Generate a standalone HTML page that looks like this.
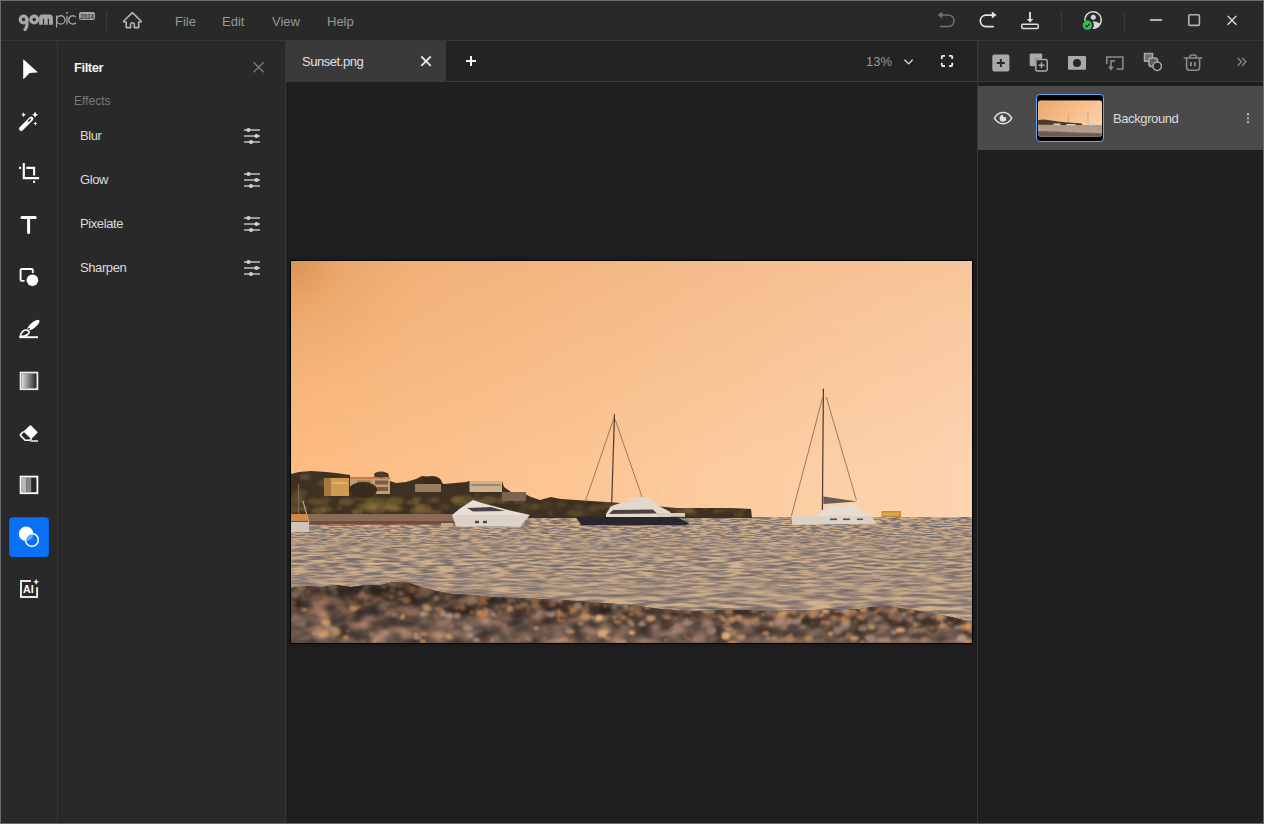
<!DOCTYPE html>
<html><head><meta charset="utf-8">
<style>
*{margin:0;padding:0;box-sizing:border-box}
html,body{width:1264px;height:824px;overflow:hidden;background:#1f1f1f;font-family:"Liberation Sans",sans-serif}
.a{position:absolute}
.t{position:absolute;white-space:nowrap;line-height:1}
svg.a{position:absolute;overflow:visible}
</style></head><body>
<!-- frame -->
<div class="a" style="left:0;top:0;width:1264px;height:824px;background:#6b6b6b"></div>
<div class="a" style="left:1px;top:1px;width:1262px;height:822px;background:#1f1f1f"></div>
<!-- title bar -->
<div class="a" style="left:1px;top:1px;width:1262px;height:39px;background:#292929"></div>
<div class="a" style="left:1px;top:40px;width:1262px;height:1px;background:#383838"></div>
<!-- left toolbar -->
<div class="a" style="left:1px;top:41px;width:56px;height:782px;background:#292929"></div>
<div class="a" style="left:57px;top:41px;width:1px;height:782px;background:#383838"></div>
<!-- filter panel -->
<div class="a" style="left:58px;top:41px;width:227px;height:782px;background:#292929"></div>
<div class="a" style="left:285px;top:41px;width:1px;height:782px;background:#383838"></div>
<!-- tab bar -->
<div class="a" style="left:286px;top:41px;width:691px;height:40px;background:#232323"></div>
<div class="a" style="left:286px;top:41px;width:160px;height:40px;background:#3a3a3a"></div>
<div class="a" style="left:286px;top:81px;width:691px;height:1px;background:#383838"></div>
<div class="a" style="left:977px;top:41px;width:1px;height:782px;background:#383838"></div>
<!-- right panel -->
<div class="a" style="left:978px;top:41px;width:285px;height:40px;background:#292929"></div>
<div class="a" style="left:978px;top:81px;width:285px;height:1px;background:#383838"></div>
<div class="a" style="left:978px;top:86px;width:285px;height:64px;background:#4a4a4a"></div>


<svg class="a" style="left:0;top:0" width="1264" height="824" viewBox="0 0 1264 824">
<!-- logo -->
<g fill="none" stroke="#a6a6a6">
 <g stroke-width="3.3">
  <circle cx="23.6" cy="19.5" r="3.35"/>
  <path d="M26.9,19.5 V24.6 Q26.9,27.8 25,29.4" stroke-linecap="round"/>
  <circle cx="34.2" cy="19.5" r="3.35"/>
 </g>
 <g stroke-width="1.3">
  <path d="M56.6,15.4 V27.4"/>
  <circle cx="60.8" cy="19.9" r="4.15"/>
  <path d="M67,15.8 V24.4"/>
  <path d="M75.9,17.1 A4.15,4.15 0 1 0 75.9,22.7"/>
 </g>
</g>
<path d="M39.1,24.7 V17.8 Q39.1,14.4 42.5,14.4 H49.5 Q52.9,14.4 52.9,17.8 V24.7 Z" fill="#a6a6a6"/>
<path d="M42.9,24.8 V19 Q43.5,18.1 44.1,19 V24.8 Z M47.8,24.8 V19 Q48.4,18.1 49,19 V24.8 Z" fill="#292929"/>
<rect x="66.2" y="12" width="1.6" height="1.6" fill="#a6a6a6"/>
<rect x="79" y="12" width="16" height="8" rx="2" fill="#a6a6a6"/>
<text x="87" y="18.5" font-family="Liberation Sans" font-size="6.4" font-weight="bold" fill="#3a3a3a" text-anchor="middle" letter-spacing="-0.1">2024</text>
<!-- separators -->
<rect x="106" y="11" width="1" height="19" fill="#3c3c3c"/>
<rect x="1061" y="11" width="1" height="19" fill="#3c3c3c"/>
<rect x="1124" y="11" width="1" height="19" fill="#3c3c3c"/>
<!-- home -->
<path d="M132.4,12.6 L123.8,21 Q123.3,21.9 124.3,22 L126.2,22 L126.2,27.6 L130.6,27.6 L130.6,24.6 A1.85,1.85 0 0 1 134.3,24.6 L134.3,27.6 L138.7,27.6 L138.7,22 L140.5,22 Q141.5,21.9 141,21 Z" fill="none" stroke="#b4b4b4" stroke-width="1.6" stroke-linejoin="round"/>
<!-- undo -->
<g stroke="#727272" stroke-width="1.5" fill="none">
 <path d="M941.5,15.1 H948.3 A5.75,5.75 0 0 1 948.3,26.6 H940.2"/>
</g>
<path d="M937.6,15.1 L942.4,11.6 L942.4,18.6 Z" fill="#727272"/>
<!-- redo -->
<g stroke="#e2e2e2" stroke-width="1.7" fill="none">
 <path d="M992.6,15.1 H985.4 A5.8,5.8 0 0 0 985.4,26.6 H993.8"/>
</g>
<path d="M996.6,15.1 L991.8,11.6 L991.8,18.6 Z" fill="#e2e2e2"/>
<!-- download -->
<g stroke="#dedede" fill="none">
 <path d="M1030,12 V20" stroke-width="1.9"/>
 <rect x="1021.8" y="24.2" width="16.4" height="4.2" rx="1" stroke-width="1.5"/>
</g>
<path d="M1026.6,18.9 L1033.4,18.9 L1030,22.6 Z" fill="#dedede"/>
<!-- profile -->
<path d="M1084.9,20.9 A8.2,8.2 0 1 1 1093.1,28.1" fill="none" stroke="#d6d6d6" stroke-width="1.6"/>
<circle cx="1093.3" cy="17.2" r="2.5" fill="#d6d6d6"/>
<path d="M1092.6,21.2 Q1097.6,21.2 1100.6,24.6 A8.2,8.2 0 0 1 1092.4,28.9 A6.4,6.4 0 0 0 1092.6,21.2 Z" fill="#d6d6d6"/>
<circle cx="1087.4" cy="25.2" r="4.6" fill="#30c35a"/>
<path d="M1085.3,25.2 L1086.9,26.9 L1089.7,23.6" stroke="#1d1d1d" stroke-width="1.2" fill="none"/>
<!-- window controls -->
<rect x="1150" y="19" width="12" height="2" fill="#b2b2b2"/>
<rect x="1188.8" y="14.8" width="10.6" height="10.6" rx="1" fill="none" stroke="#b2b2b2" stroke-width="1.6"/>
<path d="M1227.6,15.9 L1236.4,24.7 M1236.4,15.9 L1227.6,24.7" stroke="#e4e4e4" stroke-width="1.3"/>

<!-- left toolbar -->
<path d="M23.2,60.3 Q23.2,59 24.2,59.9 L37.2,71.7 Q38.2,72.6 36.8,72.6 L29.6,72.9 L24.3,78.6 Q23.2,79.7 23.2,78.3 Z" fill="#ffffff"/>
<!-- wand -->
<path d="M21.2,128.8 L31.2,118.8" stroke="#fff" stroke-width="4.4" stroke-linecap="round"/>
<path d="M28.5,121.2 L30.4,119.3" stroke="#292929" stroke-width="1.5" stroke-linecap="round"/>
<path d="M35.1,111.6 Q35.5,114.3 38.2,114.7 Q35.5,115.1 35.1,117.8 Q34.7,115.1 32,114.7 Q34.7,114.3 35.1,111.6Z" fill="#fff"/>
<path d="M23.5,112.2 Q23.8,114.4 26,114.7 Q23.8,115 23.5,117.2 Q23.2,115 21,114.7 Q23.2,114.4 23.5,112.2Z" fill="#fff"/>
<path d="M35.4,121.4 Q35.7,123.2 37.5,123.5 Q35.7,123.8 35.4,125.6 Q35.1,123.8 33.3,123.5 Q35.1,123.2 35.4,121.4Z" fill="#fff"/>
<!-- crop -->
<g stroke="#fff" stroke-width="2.1" fill="none">
 <path d="M23.8,163 V178.1 H39.1"/>
 <path d="M26.3,167.9 H34.1 V175.6"/>
</g>
<rect x="19" y="166.8" width="2.1" height="2.1" fill="#fff"/>
<rect x="33" y="180.8" width="2.1" height="2.1" fill="#fff"/>
<!-- T -->
<path d="M22,217.5 H35.2 M28.6,217.5 V232.6" stroke="#fff" stroke-width="3" stroke-linecap="round"/>
<!-- shape -->
<path d="M24.5,280.9 H21.8 Q20.6,280.9 20.6,279.7 V270.2 Q20.6,269 21.8,269 H31.6 Q32.8,269 32.8,270.2 V273" fill="none" stroke="#fff" stroke-width="1.9"/>
<circle cx="32.4" cy="280.2" r="5.8" fill="#fff"/>
<!-- brush -->
<ellipse cx="33.4" cy="325.1" rx="7.6" ry="2.8" transform="rotate(-40 33.4 325.1)" fill="#fff"/>
<ellipse cx="28.9" cy="328.8" rx="1.2" ry="0.8" transform="rotate(-40 28.9 328.8)" fill="#292929"/>
<path d="M27.3,330.2 Q30.2,331.6 28.6,333.6 Q25.8,336.6 20.2,336.6 Q20.7,333.1 23,331.1 Q25.2,329.4 27.3,330.2 Z" fill="none" stroke="#fff" stroke-width="1.6" stroke-linejoin="round"/>
<path d="M19.3,337.2 H38" stroke="#fff" stroke-width="1.9"/>
<!-- gradient square -->
<defs>
 <linearGradient id="g1" x1="0" x2="1" y1="0" y2="0"><stop offset="0" stop-color="#dcdcdc"/><stop offset="1" stop-color="#262626"/></linearGradient>
</defs>
<rect x="21.6" y="373.6" width="14.8" height="14.6" fill="url(#g1)"/>
<rect x="20.6" y="372.6" width="16.8" height="16.6" fill="none" stroke="#eeeeee" stroke-width="1.8"/>
<!-- eraser -->
<path d="M29.8,425.5 Q30.4,425 31,425.5 L37.3,431.8 Q37.9,432.4 37.3,433 L31.2,439.1 L23.4,431.6 Z" fill="#fff"/>
<path d="M23.6,431.5 L20.6,434.4 Q20,435 20.6,435.6 L25.2,440.2 H29.8 L31.6,438.6" fill="none" stroke="#fff" stroke-width="1.5" stroke-linejoin="round"/>
<path d="M30.5,441 H38" stroke="#e6e6e6" stroke-width="1.6"/>
<!-- bars icon -->
<rect x="21.6" y="477.6" width="4.6" height="14.6" fill="#b8b8b8"/>
<rect x="26.2" y="477.6" width="5" height="14.6" fill="#858585"/>
<rect x="20.6" y="476.6" width="16.8" height="16.6" fill="none" stroke="#ffffff" stroke-width="1.8"/>
<!-- active filter -->
<rect x="9.2" y="517.2" width="39.7" height="39.7" rx="3.6" fill="#0a70f5"/>
<circle cx="26.1" cy="533.8" r="7.3" fill="#fff"/>
<clipPath id="c1"><circle cx="26.1" cy="533.8" r="7.3"/></clipPath>
<circle cx="31.9" cy="539.9" r="6.3" fill="#0a70f5"/>
<circle cx="31.9" cy="539.9" r="6.3" fill="#6aa6fb" clip-path="url(#c1)"/>
<circle cx="31.9" cy="539.9" r="6.4" fill="none" stroke="#fff" stroke-width="1.5"/>
<!-- AI -->
<path d="M31,581 H21 V597.1 H37.1 V587.2" fill="none" stroke="#e8e8e8" stroke-width="2"/>
<text x="28.3" y="593.2" font-family="Liberation Sans" font-weight="bold" font-size="10.6" fill="#fff" text-anchor="middle">AI</text>
<path d="M36.2,578.9 Q36.6,581.4 39.1,581.8 Q36.6,582.2 36.2,584.7 Q35.8,582.2 33.3,581.8 Q35.8,581.4 36.2,578.9Z" fill="#fff"/>

<!-- filter panel close -->
<path d="M253.6,62.3 L263.6,72.3 M263.6,62.3 L253.6,72.3" stroke="#7c7c7c" stroke-width="1.4"/>
<!-- sliders -->
<g id="sl">
 <path d="M244,130 H260 M244,136 H260 M244,142 H260" stroke="#bebebe" stroke-width="1.5"/>
 <circle cx="248.5" cy="130" r="2.1" fill="#d2d2d2"/>
 <circle cx="256.5" cy="136" r="2.1" fill="#d2d2d2"/>
 <circle cx="251" cy="142" r="2.1" fill="#d2d2d2"/>
</g>
<use href="#sl" y="44"/>
<use href="#sl" y="88"/>
<use href="#sl" y="132"/>

<!-- tab bar -->
<path d="M421.3,56.5 L430.7,65.9 M430.7,56.5 L421.3,65.9" stroke="#e6e6e6" stroke-width="1.8"/>
<path d="M466,61 H476 M471,56 V66" stroke="#f2f2f2" stroke-width="2"/>
<path d="M904.5,59.8 L908.6,63.9 L912.7,59.8" fill="none" stroke="#dadada" stroke-width="1.3"/>
<path d="M941.8,59 V56.6 Q941.8,55.8 942.6,55.8 H945 M949,55.8 H951.4 Q952.2,55.8 952.2,56.6 V59 M952.2,62.8 V65.2 Q952.2,66 951.4,66 H949 M945,66 H942.6 Q941.8,66 941.8,65.2 V62.8" fill="none" stroke="#e8e8e8" stroke-width="1.8"/>

<!-- layer toolbar -->
<rect x="992.3" y="54.4" width="17.1" height="17.1" rx="2" fill="#a9a9a9"/>
<path d="M996.8,63 H1004.9 M1000.85,58.9 V67.1" stroke="#262626" stroke-width="1.9"/>
<path d="M1035,58.8 V58 Q1035,56.8 1036.2,56.8 H1037.6" fill="none"/>
<path d="M1031,53.6 H1041 Q1042.2,53.6 1042.2,54.8 V58.7 H1036.2 Q1035,58.7 1035,59.9 V66.3 H1031 Q1029.7,66.3 1029.7,65 V54.9 Q1029.7,53.6 1031,53.6 Z" fill="#a9a9a9"/>
<rect x="1035.8" y="59.5" width="11.4" height="11.4" rx="1.3" fill="#262626" stroke="#a9a9a9" stroke-width="1.5"/>
<path d="M1038.5,65.2 H1044.5 M1041.5,62.2 V68.2" stroke="#a9a9a9" stroke-width="1.4"/>
<rect x="1068" y="55.9" width="18" height="13.9" rx="1" fill="#a9a9a9"/>
<circle cx="1077" cy="62.9" r="4" fill="#262626"/>
<path d="M1106.8,64 V57 H1122.9 V69 H1116.6" fill="none" stroke="#8a8a8a" stroke-width="1.6"/>
<path d="M1115,60.9 H1111 V67" fill="none" stroke="#8a8a8a" stroke-width="1.6"/>
<path d="M1108.1,66.6 L1113.9,66.6 L1111,70.8 Z" fill="#8a8a8a"/>
<rect x="1144.5" y="53.5" width="8" height="7.8" fill="#6e6e6e" stroke="#a9a9a9" stroke-width="1.5"/>
<rect x="1148.9" y="57.9" width="8.6" height="8.6" rx="2.6" fill="#5e5e5e" stroke="#a9a9a9" stroke-width="1.5"/>
<circle cx="1157.2" cy="66.3" r="4.2" fill="#292929" stroke="#a9a9a9" stroke-width="1.5"/>
<path d="M1184.2,58 H1201.8" stroke="#8a8a8a" stroke-width="1.6" stroke-linecap="round"/>
<path d="M1190,57.8 V56.4 Q1190,54.9 1191.5,54.9 H1194.7 Q1196.2,54.9 1196.2,56.4 V57.8" fill="none" stroke="#8a8a8a" stroke-width="1.5"/>
<path d="M1186.6,58.3 V67.6 Q1186.6,70.2 1189.2,70.2 H1197 Q1199.6,70.2 1199.6,67.6 V58.3" fill="none" stroke="#8a8a8a" stroke-width="1.6"/>
<path d="M1190.9,62 V66.3 M1194.8,62 V66.3" stroke="#8a8a8a" stroke-width="1.9"/>
<path d="M1237.7,57.7 L1241.4,61.7 L1237.7,65.7 M1242.1,57.7 L1245.8,61.7 L1242.1,65.7" fill="none" stroke="#8a8a8a" stroke-width="1.3"/>

<!-- layer row -->
<path d="M994.4,118.2 C996.8,114.2 999.6,112.6 1003.1,112.6 C1006.6,112.6 1009.4,114.2 1011.8,118.2 C1009.4,122.2 1006.6,123.8 1003.1,123.8 C999.6,123.8 996.8,122.2 994.4,118.2 Z" fill="none" stroke="#e0e0e0" stroke-width="1.5"/>
<circle cx="1002.9" cy="118.4" r="3.3" fill="#e0e0e0"/>
<circle cx="1004.9" cy="115.4" r="1.9" fill="#4a4a4a"/>
<circle cx="1248" cy="114.3" r="1.05" fill="#d0d0d0"/>
<circle cx="1248" cy="118.2" r="1.05" fill="#d0d0d0"/>
<circle cx="1248" cy="122.1" r="1.05" fill="#d0d0d0"/>
<rect x="1036.5" y="94.5" width="67" height="47" rx="3.5" fill="#000" stroke="#6aa6ee" stroke-width="1"/>
</svg>





























<!-- PHOTO -->
<div class="a" style="left:290px;top:260px;width:683px;height:384px;background:#000;box-shadow:0 0 3px 1px rgba(0,0,0,0.25)"></div>
<svg class="a" style="left:290px;top:260px" width="683" height="384" viewBox="0 0 683 384">
<rect width="683" height="384" fill="#000"/>
<svg x="1" y="1" width="681" height="382" viewBox="0 0 681 382" overflow="hidden">
<defs>
<linearGradient id="skyB" x1="0" x2="1" y1="0" y2="0"><stop offset="0" stop-color="#fcbc82"/><stop offset="0.5" stop-color="#fcc898"/><stop offset="1" stop-color="#fdd4b0"/></linearGradient>
<linearGradient id="skyT" x1="0" x2="1" y1="0" y2="0"><stop offset="0" stop-color="#eeab70"/><stop offset="0.3" stop-color="#f2b37d"/><stop offset="0.6" stop-color="#f4bb8b"/><stop offset="1" stop-color="#f8c59b"/></linearGradient>
<linearGradient id="mT" x1="0" x2="0" y1="0" y2="1"><stop offset="0" stop-color="#fff"/><stop offset="0.8" stop-color="#000"/></linearGradient>
<mask id="mask1" maskUnits="userSpaceOnUse" x="0" y="0" width="681" height="256"><rect width="681" height="256" fill="url(#mT)"/></mask>
<radialGradient id="vig" cx="0" cy="0" r="130" gradientUnits="userSpaceOnUse"><stop offset="0" stop-color="#c88040" stop-opacity="0.6"/><stop offset="0.4" stop-color="#d8904c" stop-opacity="0.2"/><stop offset="1" stop-color="#e09a58" stop-opacity="0"/></radialGradient>
<linearGradient id="sea" x1="0" x2="0" y1="0" y2="1"><stop offset="0" stop-color="#b9a690"/><stop offset="0.5" stop-color="#ae9a86"/><stop offset="1" stop-color="#a58f7e"/></linearGradient>
<linearGradient id="beach" x1="0" x2="0" y1="0" y2="1"><stop offset="0" stop-color="#5a4a40"/><stop offset="1" stop-color="#6e5a50"/></linearGradient>
<filter id="blur1" x="-20%" y="-20%" width="140%" height="140%"><feGaussianBlur stdDeviation="1.2"/></filter>
<filter id="blur2" x="-20%" y="-20%" width="140%" height="140%"><feGaussianBlur stdDeviation="0.5"/></filter>
<filter id="water1" x="0" y="0" width="100%" height="100%" filterUnits="objectBoundingBox" color-interpolation-filters="sRGB"><feTurbulence type="fractalNoise" baseFrequency="0.1 0.9" numOctaves="2" seed="3" result="n"/><feColorMatrix in="n" type="matrix" values="1 0 0 0 0  1 0 0 0 0  1 0 0 0 0  0 0 0 0 1"/><feComponentTransfer><feFuncR type="table" tableValues="0.38 0.42 0.54 0.78 0.85 0.87"/><feFuncG type="table" tableValues="0.38 0.41 0.48 0.66 0.71 0.72"/><feFuncB type="table" tableValues="0.4 0.42 0.46 0.53 0.56 0.56"/></feComponentTransfer></filter>
<filter id="water2" x="0" y="0" width="100%" height="100%" filterUnits="objectBoundingBox" color-interpolation-filters="sRGB"><feTurbulence type="fractalNoise" baseFrequency="0.055 0.5" numOctaves="2" seed="5" result="n"/><feColorMatrix in="n" type="matrix" values="1 0 0 0 0  1 0 0 0 0  1 0 0 0 0  0 0 0 0 1"/><feComponentTransfer><feFuncR type="table" tableValues="0.38 0.42 0.54 0.78 0.85 0.87"/><feFuncG type="table" tableValues="0.38 0.41 0.48 0.66 0.71 0.72"/><feFuncB type="table" tableValues="0.4 0.42 0.46 0.53 0.56 0.56"/></feComponentTransfer></filter>
<filter id="water3" x="0" y="0" width="100%" height="100%" filterUnits="objectBoundingBox" color-interpolation-filters="sRGB"><feTurbulence type="fractalNoise" baseFrequency="0.035 0.3" numOctaves="2" seed="9" result="n"/><feColorMatrix in="n" type="matrix" values="1 0 0 0 0  1 0 0 0 0  1 0 0 0 0  0 0 0 0 1"/><feComponentTransfer><feFuncR type="table" tableValues="0.38 0.42 0.54 0.78 0.85 0.87"/><feFuncG type="table" tableValues="0.38 0.41 0.48 0.66 0.71 0.72"/><feFuncB type="table" tableValues="0.4 0.42 0.46 0.53 0.56 0.56"/></feComponentTransfer></filter>
<filter id="pebf" x="0" y="0" width="100%" height="100%" filterUnits="objectBoundingBox" color-interpolation-filters="sRGB"><feTurbulence type="fractalNoise" baseFrequency="0.05 0.09" numOctaves="3" seed="11" result="n"/><feColorMatrix in="n" type="matrix" values="1 0 0 0 0  1 0 0 0 0  1 0 0 0 0  0 0 0 0 1"/><feComponentTransfer><feFuncR type="table" tableValues="0.1 0.16 0.28 0.5 0.74 0.86"/><feFuncG type="table" tableValues="0.08 0.12 0.22 0.39 0.53 0.6"/><feFuncB type="table" tableValues="0.08 0.1 0.19 0.33 0.42 0.46"/></feComponentTransfer><feGaussianBlur stdDeviation="1.4"/></filter>
<linearGradient id="mW" x1="0" x2="0" y1="0" y2="1"><stop offset="0" stop-color="#000"/><stop offset="1" stop-color="#fff"/></linearGradient>
<linearGradient id="mW2" x1="0" x2="0" y1="256" y2="382" gradientUnits="userSpaceOnUse"><stop offset="0.1" stop-color="#000"/><stop offset="0.35" stop-color="#fff"/></linearGradient>
<linearGradient id="mW3" x1="0" x2="0" y1="256" y2="382" gradientUnits="userSpaceOnUse"><stop offset="0.4" stop-color="#000"/><stop offset="0.7" stop-color="#fff"/></linearGradient>
<mask id="mask2" maskUnits="userSpaceOnUse" x="0" y="256" width="681" height="126"><rect y="256" width="681" height="126" fill="url(#mW2)"/></mask>
<mask id="mask3" maskUnits="userSpaceOnUse" x="0" y="256" width="681" height="126"><rect y="256" width="681" height="126" fill="url(#mW3)"/></mask>
</defs>
<g id="photo">
<rect width="681" height="260" fill="url(#skyB)"/>
<rect width="681" height="256" fill="url(#skyT)" mask="url(#mask1)"/>
<rect width="681" height="256" fill="url(#vig)"/>
<rect y="256" width="681" height="126" fill="#bea286"/>
<rect y="256" width="681" height="126" filter="url(#water1)" opacity="1"/>
<rect y="256" width="681" height="126" filter="url(#water2)" mask="url(#mask2)"/>
<rect y="256" width="681" height="126" filter="url(#water3)" mask="url(#mask3)"/>
<clipPath id="bclip"><path d="M0,327 L15,325 L30,326 L45,324 L60,326 L75,324 L90,324 L102,321 L118,322 L130,326 L145,330 L161,333 L180,334 L200,336 L230,337 L269,339 L300,341 L340,344 L370,348 L400,350 L440,349 L480,350 L520,349 L569,348 L580,346 L595,345 L609,347 L640,352 L660,356 L681,361 L681,382 L0,382 Z"/></clipPath>
<g clip-path="url(#bclip)"><rect y="300" width="681" height="82" fill="#4a3c36"/><rect y="300" width="681" height="82" filter="url(#pebf)"/>
<g filter="url(#blur1)"><ellipse cx="220.5" cy="339.3" rx="3.8" ry="2.0" fill="#a89080" opacity="0.54"/><ellipse cx="396.9" cy="377.7" rx="2.3" ry="1.2" fill="#c88048" opacity="0.53"/><ellipse cx="61.8" cy="341.3" rx="4.4" ry="2.4" fill="#d89050" opacity="0.75"/><ellipse cx="397.0" cy="350.3" rx="3.5" ry="1.8" fill="#d89050" opacity="0.52"/><ellipse cx="584.6" cy="351.4" rx="2.0" ry="1.1" fill="#f0b070" opacity="0.72"/><ellipse cx="464.4" cy="350.7" rx="3.5" ry="2.0" fill="#e0a060" opacity="0.72"/><ellipse cx="42.8" cy="325.1" rx="2.2" ry="1.7" fill="#c88048" opacity="0.81"/><ellipse cx="317.1" cy="377.5" rx="2.8" ry="1.7" fill="#d89050" opacity="0.78"/><ellipse cx="166.2" cy="354.5" rx="3.3" ry="2.8" fill="#b8a090" opacity="0.68"/><ellipse cx="414.7" cy="350.3" rx="3.3" ry="1.9" fill="#f0b070" opacity="0.56"/><ellipse cx="333.0" cy="343.8" rx="3.8" ry="3.1" fill="#a89080" opacity="0.82"/><ellipse cx="557.3" cy="354.9" rx="2.7" ry="1.9" fill="#c88048" opacity="0.53"/><ellipse cx="63.7" cy="333.4" rx="3.9" ry="2.1" fill="#b8a090" opacity="0.78"/><ellipse cx="440.7" cy="381.7" rx="4.4" ry="2.7" fill="#c88048" opacity="0.85"/><ellipse cx="236.3" cy="378.1" rx="2.7" ry="2.0" fill="#c88048" opacity="0.52"/><ellipse cx="523.2" cy="350.5" rx="2.4" ry="1.6" fill="#c88048" opacity="0.53"/><ellipse cx="305.9" cy="358.0" rx="4.6" ry="3.8" fill="#a89080" opacity="0.61"/><ellipse cx="282.8" cy="348.9" rx="4.6" ry="4.1" fill="#d89050" opacity="0.53"/><ellipse cx="103.0" cy="353.6" rx="1.5" ry="1.3" fill="#d89050" opacity="0.61"/><ellipse cx="2.8" cy="341.6" rx="2.8" ry="2.0" fill="#d89050" opacity="0.78"/><ellipse cx="351.0" cy="363.2" rx="3.9" ry="2.0" fill="#b8a090" opacity="0.82"/><ellipse cx="267.2" cy="349.8" rx="1.9" ry="1.4" fill="#e0a060" opacity="0.58"/><ellipse cx="670.6" cy="365.4" rx="1.9" ry="1.4" fill="#e0a060" opacity="0.50"/><ellipse cx="103.0" cy="323.0" rx="2.8" ry="1.4" fill="#d89050" opacity="0.75"/><ellipse cx="101.2" cy="328.9" rx="2.7" ry="1.8" fill="#e0a060" opacity="0.55"/><ellipse cx="332.4" cy="380.7" rx="3.2" ry="2.0" fill="#d89050" opacity="0.54"/><ellipse cx="233.3" cy="343.3" rx="4.4" ry="2.5" fill="#e0a060" opacity="0.58"/><ellipse cx="648.3" cy="359.8" rx="3.9" ry="3.4" fill="#a89080" opacity="0.62"/><ellipse cx="437.8" cy="350.0" rx="4.5" ry="3.2" fill="#d89050" opacity="0.64"/><ellipse cx="151.7" cy="351.5" rx="3.3" ry="2.5" fill="#a89080" opacity="0.82"/><ellipse cx="670.7" cy="377.0" rx="4.3" ry="3.6" fill="#b8a090" opacity="0.82"/><ellipse cx="136.1" cy="346.4" rx="4.1" ry="3.6" fill="#f0b070" opacity="0.69"/><ellipse cx="131.9" cy="352.6" rx="2.7" ry="2.2" fill="#b8a090" opacity="0.90"/><ellipse cx="650.4" cy="360.2" rx="2.3" ry="1.3" fill="#d89050" opacity="0.64"/><ellipse cx="328.7" cy="381.1" rx="3.6" ry="1.8" fill="#b8a090" opacity="0.64"/><ellipse cx="438.0" cy="374.2" rx="1.9" ry="1.3" fill="#b8a090" opacity="0.80"/><ellipse cx="325.5" cy="345.9" rx="4.3" ry="2.7" fill="#b8a090" opacity="0.66"/><ellipse cx="273.3" cy="378.6" rx="4.0" ry="2.3" fill="#d89050" opacity="0.51"/><ellipse cx="402.3" cy="360.1" rx="3.8" ry="2.8" fill="#a89080" opacity="0.89"/><ellipse cx="447.6" cy="356.0" rx="3.4" ry="1.9" fill="#e0a060" opacity="0.82"/><ellipse cx="494.7" cy="350.7" rx="4.1" ry="2.3" fill="#d89050" opacity="0.83"/><ellipse cx="143.7" cy="336.3" rx="2.5" ry="1.5" fill="#a89080" opacity="0.63"/><ellipse cx="370.7" cy="373.9" rx="1.7" ry="1.4" fill="#c88048" opacity="0.76"/><ellipse cx="555.0" cy="360.8" rx="4.4" ry="3.7" fill="#d89050" opacity="0.71"/><ellipse cx="356.5" cy="346.3" rx="3.0" ry="1.7" fill="#e0a060" opacity="0.81"/><ellipse cx="102.0" cy="324.2" rx="3.7" ry="2.0" fill="#e0a060" opacity="0.63"/><ellipse cx="353.0" cy="360.7" rx="4.2" ry="2.3" fill="#a89080" opacity="0.52"/><ellipse cx="130.3" cy="326.6" rx="1.8" ry="1.3" fill="#e0a060" opacity="0.80"/><ellipse cx="621.4" cy="358.7" rx="3.6" ry="2.6" fill="#a89080" opacity="0.58"/><ellipse cx="188.8" cy="351.9" rx="4.3" ry="3.0" fill="#d89050" opacity="0.78"/><ellipse cx="596.9" cy="378.9" rx="2.4" ry="1.7" fill="#d89050" opacity="0.84"/><ellipse cx="93.4" cy="325.6" rx="3.0" ry="1.6" fill="#d89050" opacity="0.67"/><ellipse cx="144.8" cy="338.6" rx="1.9" ry="1.6" fill="#b8a090" opacity="0.76"/><ellipse cx="249.4" cy="343.6" rx="2.0" ry="1.4" fill="#b8a090" opacity="0.88"/><ellipse cx="271.2" cy="353.7" rx="5.0" ry="4.1" fill="#d89050" opacity="0.78"/><ellipse cx="677.0" cy="365.7" rx="3.0" ry="1.9" fill="#e0a060" opacity="0.79"/><ellipse cx="13.3" cy="348.6" rx="3.0" ry="1.5" fill="#f0b070" opacity="0.71"/><ellipse cx="201.2" cy="379.3" rx="1.9" ry="1.6" fill="#d89050" opacity="0.89"/><ellipse cx="71.4" cy="332.4" rx="1.6" ry="1.3" fill="#f0b070" opacity="0.80"/><ellipse cx="558.3" cy="374.7" rx="3.9" ry="3.4" fill="#c88048" opacity="0.56"/><ellipse cx="626.0" cy="363.6" rx="4.0" ry="2.1" fill="#e0a060" opacity="0.82"/><ellipse cx="124.9" cy="373.2" rx="2.4" ry="1.2" fill="#e0a060" opacity="0.82"/><ellipse cx="57.0" cy="370.3" rx="1.7" ry="1.5" fill="#c88048" opacity="0.50"/><ellipse cx="677.1" cy="366.0" rx="4.7" ry="3.5" fill="#e0a060" opacity="0.71"/><ellipse cx="162.4" cy="334.8" rx="2.1" ry="1.1" fill="#d89050" opacity="0.87"/><ellipse cx="428.1" cy="362.0" rx="2.2" ry="1.5" fill="#b8a090" opacity="0.57"/><ellipse cx="236.3" cy="337.4" rx="2.4" ry="1.2" fill="#b8a090" opacity="0.70"/><ellipse cx="666.1" cy="366.5" rx="2.4" ry="1.6" fill="#b8a090" opacity="0.83"/><ellipse cx="294.3" cy="355.0" rx="4.4" ry="2.9" fill="#a89080" opacity="0.62"/><ellipse cx="146.5" cy="336.0" rx="2.2" ry="1.9" fill="#b8a090" opacity="0.75"/><ellipse cx="275.6" cy="348.1" rx="1.7" ry="0.9" fill="#e0a060" opacity="0.75"/><ellipse cx="599.2" cy="355.9" rx="1.7" ry="1.3" fill="#c88048" opacity="0.85"/><ellipse cx="456.6" cy="354.3" rx="2.3" ry="1.4" fill="#c88048" opacity="0.57"/><ellipse cx="183.2" cy="334.3" rx="2.8" ry="1.8" fill="#a89080" opacity="0.63"/><ellipse cx="23.5" cy="372.3" rx="2.3" ry="1.3" fill="#f0b070" opacity="0.65"/><ellipse cx="323.2" cy="356.7" rx="2.2" ry="1.5" fill="#e0a060" opacity="0.54"/><ellipse cx="556.4" cy="350.1" rx="3.6" ry="2.3" fill="#f0b070" opacity="0.62"/><ellipse cx="158.5" cy="354.7" rx="3.4" ry="2.7" fill="#b8a090" opacity="0.86"/><ellipse cx="533.9" cy="364.1" rx="4.2" ry="3.3" fill="#c88048" opacity="0.56"/><ellipse cx="493.2" cy="366.3" rx="1.7" ry="1.4" fill="#a89080" opacity="0.75"/><ellipse cx="499.8" cy="373.3" rx="2.0" ry="1.4" fill="#a89080" opacity="0.73"/><ellipse cx="553.6" cy="348.4" rx="3.9" ry="3.2" fill="#b8a090" opacity="0.77"/><ellipse cx="472.2" cy="353.4" rx="1.6" ry="0.9" fill="#f0b070" opacity="0.88"/><ellipse cx="256.5" cy="351.6" rx="1.7" ry="0.9" fill="#a89080" opacity="0.77"/><ellipse cx="333.2" cy="343.5" rx="4.3" ry="3.4" fill="#a89080" opacity="0.86"/><ellipse cx="62.6" cy="347.1" rx="4.1" ry="2.8" fill="#e0a060" opacity="0.84"/><ellipse cx="159.9" cy="365.2" rx="2.3" ry="1.8" fill="#c88048" opacity="0.70"/><ellipse cx="260.5" cy="353.0" rx="3.9" ry="3.1" fill="#a89080" opacity="0.75"/><ellipse cx="135.0" cy="352.7" rx="2.7" ry="2.0" fill="#b8a090" opacity="0.62"/><ellipse cx="386.6" cy="349.2" rx="1.7" ry="1.0" fill="#b8a090" opacity="0.54"/><ellipse cx="148.2" cy="348.2" rx="4.0" ry="2.4" fill="#c88048" opacity="0.69"/><ellipse cx="80.7" cy="373.0" rx="2.2" ry="2.0" fill="#c88048" opacity="0.51"/><ellipse cx="312.6" cy="371.7" rx="4.9" ry="3.3" fill="#f0b070" opacity="0.65"/><ellipse cx="624.2" cy="378.7" rx="1.8" ry="0.9" fill="#b8a090" opacity="0.71"/><ellipse cx="648.8" cy="355.1" rx="4.4" ry="3.1" fill="#e0a060" opacity="0.78"/><ellipse cx="157.6" cy="374.6" rx="3.2" ry="1.6" fill="#e0a060" opacity="0.88"/><ellipse cx="464.2" cy="358.0" rx="4.0" ry="2.7" fill="#c88048" opacity="0.63"/><ellipse cx="572.2" cy="347.4" rx="4.1" ry="3.4" fill="#e0a060" opacity="0.88"/><ellipse cx="133.3" cy="326.9" rx="4.1" ry="2.5" fill="#e0a060" opacity="0.66"/><ellipse cx="680.2" cy="370.4" rx="2.8" ry="1.9" fill="#f0b070" opacity="0.84"/><ellipse cx="191.1" cy="335.7" rx="3.8" ry="2.9" fill="#d89050" opacity="0.60"/><ellipse cx="181.0" cy="351.6" rx="2.2" ry="1.4" fill="#c88048" opacity="0.85"/><ellipse cx="552.9" cy="365.2" rx="4.7" ry="4.1" fill="#a89080" opacity="0.58"/><ellipse cx="54.9" cy="376.4" rx="2.9" ry="2.2" fill="#d89050" opacity="0.76"/><ellipse cx="194.9" cy="336.0" rx="4.7" ry="2.6" fill="#c88048" opacity="0.67"/><ellipse cx="191.9" cy="341.2" rx="4.1" ry="3.1" fill="#c88048" opacity="0.76"/><ellipse cx="204.9" cy="355.2" rx="2.9" ry="1.6" fill="#d89050" opacity="0.53"/><ellipse cx="340.9" cy="371.8" rx="3.4" ry="2.3" fill="#f0b070" opacity="0.90"/><ellipse cx="306.4" cy="343.6" rx="2.2" ry="1.2" fill="#f0b070" opacity="0.72"/><ellipse cx="217.4" cy="346.7" rx="4.3" ry="2.5" fill="#e0a060" opacity="0.80"/><ellipse cx="281.1" cy="351.0" rx="3.3" ry="2.2" fill="#f0b070" opacity="0.80"/><ellipse cx="339.2" cy="360.5" rx="2.8" ry="2.1" fill="#a89080" opacity="0.75"/><ellipse cx="587.6" cy="349.2" rx="2.4" ry="1.5" fill="#c88048" opacity="0.76"/><ellipse cx="294.1" cy="347.8" rx="4.4" ry="3.9" fill="#d89050" opacity="0.51"/><ellipse cx="483.2" cy="377.1" rx="3.2" ry="2.3" fill="#e0a060" opacity="0.53"/><ellipse cx="633.5" cy="378.7" rx="3.3" ry="2.3" fill="#c88048" opacity="0.60"/><ellipse cx="74.3" cy="327.6" rx="3.3" ry="2.6" fill="#b8a090" opacity="0.78"/><ellipse cx="576.5" cy="376.6" rx="1.8" ry="1.5" fill="#e0a060" opacity="0.81"/><ellipse cx="158.4" cy="376.2" rx="3.8" ry="2.3" fill="#d89050" opacity="0.75"/><ellipse cx="359.7" cy="356.9" rx="4.2" ry="2.3" fill="#f0b070" opacity="0.71"/><ellipse cx="396.9" cy="357.6" rx="2.3" ry="1.7" fill="#e0a060" opacity="0.71"/><ellipse cx="678.5" cy="363.6" rx="2.6" ry="2.2" fill="#d89050" opacity="0.69"/><ellipse cx="159.9" cy="338.8" rx="4.9" ry="3.8" fill="#f0b070" opacity="0.52"/><ellipse cx="132.2" cy="372.7" rx="3.8" ry="2.0" fill="#d89050" opacity="0.77"/><ellipse cx="630.0" cy="353.8" rx="1.6" ry="1.0" fill="#c88048" opacity="0.64"/><ellipse cx="269.9" cy="339.1" rx="2.5" ry="2.1" fill="#e0a060" opacity="0.58"/><ellipse cx="660.5" cy="360.6" rx="4.4" ry="2.6" fill="#d89050" opacity="0.61"/><ellipse cx="605.6" cy="347.8" rx="3.7" ry="2.7" fill="#d89050" opacity="0.69"/><ellipse cx="620.0" cy="349.2" rx="3.6" ry="3.1" fill="#e0a060" opacity="0.59"/><ellipse cx="663.4" cy="358.2" rx="1.7" ry="0.9" fill="#c88048" opacity="0.68"/><ellipse cx="484.9" cy="355.5" rx="1.9" ry="1.0" fill="#d89050" opacity="0.63"/><ellipse cx="126.3" cy="376.6" rx="4.1" ry="2.1" fill="#b8a090" opacity="0.79"/><ellipse cx="571.4" cy="381.2" rx="3.0" ry="1.7" fill="#e0a060" opacity="0.61"/><ellipse cx="239.3" cy="379.1" rx="1.9" ry="1.7" fill="#d89050" opacity="0.65"/><ellipse cx="523.5" cy="354.6" rx="4.3" ry="2.3" fill="#b8a090" opacity="0.69"/><ellipse cx="253.8" cy="376.8" rx="2.2" ry="1.4" fill="#c88048" opacity="0.51"/><ellipse cx="279.8" cy="370.6" rx="4.2" ry="2.2" fill="#e0a060" opacity="0.69"/><ellipse cx="547.1" cy="349.0" rx="2.2" ry="1.1" fill="#a89080" opacity="0.64"/><ellipse cx="185.4" cy="379.0" rx="3.7" ry="2.2" fill="#b8a090" opacity="0.78"/><ellipse cx="629.4" cy="355.4" rx="4.0" ry="3.0" fill="#b8a090" opacity="0.88"/><ellipse cx="44.5" cy="367.6" rx="1.9" ry="1.5" fill="#c88048" opacity="0.88"/><ellipse cx="263.2" cy="344.1" rx="3.0" ry="2.1" fill="#c88048" opacity="0.57"/><ellipse cx="546.5" cy="369.7" rx="4.4" ry="3.5" fill="#a89080" opacity="0.59"/><ellipse cx="586.5" cy="357.0" rx="4.2" ry="3.1" fill="#a89080" opacity="0.58"/><ellipse cx="512.7" cy="353.2" rx="1.7" ry="0.9" fill="#a89080" opacity="0.72"/><ellipse cx="109.4" cy="338.3" rx="1.9" ry="1.0" fill="#a89080" opacity="0.53"/><ellipse cx="65.7" cy="345.2" rx="4.0" ry="2.7" fill="#d89050" opacity="0.55"/><ellipse cx="313.9" cy="375.7" rx="2.3" ry="1.7" fill="#b8a090" opacity="0.80"/><ellipse cx="531.0" cy="354.1" rx="2.5" ry="1.5" fill="#f0b070" opacity="0.80"/><ellipse cx="135.6" cy="334.2" rx="2.4" ry="1.3" fill="#a89080" opacity="0.58"/><ellipse cx="44.1" cy="331.4" rx="2.4" ry="1.7" fill="#b8a090" opacity="0.82"/><ellipse cx="444.9" cy="381.6" rx="1.9" ry="1.3" fill="#d89050" opacity="0.84"/><ellipse cx="622.7" cy="349.5" rx="2.5" ry="1.4" fill="#d89050" opacity="0.74"/><ellipse cx="563.8" cy="351.0" rx="1.8" ry="1.2" fill="#d89050" opacity="0.68"/><ellipse cx="177.0" cy="366.9" rx="4.8" ry="2.6" fill="#a89080" opacity="0.78"/><ellipse cx="238.1" cy="337.7" rx="2.7" ry="1.4" fill="#f0b070" opacity="0.52"/><ellipse cx="498.6" cy="377.9" rx="4.4" ry="3.6" fill="#c88048" opacity="0.77"/><ellipse cx="126.1" cy="334.7" rx="2.2" ry="1.8" fill="#a89080" opacity="0.69"/><ellipse cx="278.0" cy="369.7" rx="3.8" ry="2.1" fill="#a89080" opacity="0.54"/><ellipse cx="111.5" cy="356.6" rx="2.9" ry="1.8" fill="#f0b070" opacity="0.67"/><ellipse cx="35.0" cy="361.8" rx="4.6" ry="3.1" fill="#e0a060" opacity="0.85"/><ellipse cx="678.7" cy="365.2" rx="2.2" ry="1.7" fill="#d89050" opacity="0.88"/><ellipse cx="295.7" cy="343.3" rx="1.9" ry="1.0" fill="#a89080" opacity="0.85"/><ellipse cx="313.9" cy="344.7" rx="1.6" ry="1.1" fill="#b8a090" opacity="0.82"/><ellipse cx="270.2" cy="357.7" rx="4.7" ry="3.8" fill="#d89050" opacity="0.56"/><ellipse cx="192.9" cy="352.9" rx="4.7" ry="2.6" fill="#c88048" opacity="0.80"/><ellipse cx="539.5" cy="372.7" rx="2.6" ry="2.1" fill="#e0a060" opacity="0.89"/><ellipse cx="328.7" cy="343.6" rx="4.7" ry="3.1" fill="#b8a090" opacity="0.75"/><ellipse cx="561.5" cy="350.3" rx="4.3" ry="2.5" fill="#c88048" opacity="0.75"/><ellipse cx="133.6" cy="344.9" rx="3.5" ry="1.8" fill="#a89080" opacity="0.56"/><ellipse cx="244.6" cy="340.3" rx="4.9" ry="4.0" fill="#d89050" opacity="0.52"/><ellipse cx="383.0" cy="370.7" rx="1.6" ry="1.4" fill="#e0a060" opacity="0.66"/><ellipse cx="310.4" cy="373.2" rx="4.2" ry="3.2" fill="#f0b070" opacity="0.73"/><ellipse cx="289.9" cy="362.6" rx="3.1" ry="2.1" fill="#e0a060" opacity="0.50"/><ellipse cx="671.6" cy="366.1" rx="3.1" ry="2.3" fill="#c88048" opacity="0.83"/><ellipse cx="552.0" cy="356.9" rx="1.7" ry="1.1" fill="#f0b070" opacity="0.54"/><ellipse cx="301.0" cy="356.0" rx="1.6" ry="1.2" fill="#e0a060" opacity="0.87"/><ellipse cx="213.6" cy="364.3" rx="1.8" ry="1.4" fill="#c88048" opacity="0.76"/><ellipse cx="534.1" cy="348.9" rx="1.7" ry="1.3" fill="#b8a090" opacity="0.83"/><ellipse cx="131.9" cy="380.5" rx="3.2" ry="2.8" fill="#d89050" opacity="0.77"/><ellipse cx="491.1" cy="353.1" rx="4.4" ry="3.3" fill="#f0b070" opacity="0.56"/><ellipse cx="610.5" cy="352.3" rx="4.4" ry="2.4" fill="#a89080" opacity="0.89"/><ellipse cx="327.0" cy="360.8" rx="3.7" ry="2.2" fill="#f0b070" opacity="0.51"/><ellipse cx="124.0" cy="327.8" rx="4.8" ry="3.7" fill="#c88048" opacity="0.57"/><ellipse cx="534.5" cy="350.0" rx="3.4" ry="2.5" fill="#f0b070" opacity="0.89"/><ellipse cx="308.5" cy="356.8" rx="3.9" ry="3.4" fill="#f0b070" opacity="0.90"/><ellipse cx="428.9" cy="357.4" rx="4.3" ry="2.6" fill="#f0b070" opacity="0.73"/><ellipse cx="245.3" cy="367.3" rx="3.0" ry="1.7" fill="#b8a090" opacity="0.88"/><ellipse cx="201.8" cy="353.1" rx="2.6" ry="2.3" fill="#a89080" opacity="0.87"/><ellipse cx="610.0" cy="369.0" rx="4.1" ry="2.4" fill="#f0b070" opacity="0.75"/><ellipse cx="294.4" cy="355.8" rx="4.6" ry="2.6" fill="#d89050" opacity="0.75"/><ellipse cx="31.0" cy="326.6" rx="3.5" ry="2.2" fill="#a89080" opacity="0.64"/><ellipse cx="152.7" cy="354.0" rx="3.6" ry="2.1" fill="#a89080" opacity="0.83"/><ellipse cx="108.0" cy="321.5" rx="4.3" ry="3.4" fill="#c88048" opacity="0.54"/><ellipse cx="434.6" cy="375.9" rx="4.2" ry="2.8" fill="#f0b070" opacity="0.89"/><ellipse cx="38.2" cy="367.4" rx="4.6" ry="3.4" fill="#a89080" opacity="0.68"/><ellipse cx="638.2" cy="370.7" rx="2.4" ry="2.0" fill="#e0a060" opacity="0.52"/><ellipse cx="17.2" cy="329.7" rx="2.1" ry="1.8" fill="#e0a060" opacity="0.50"/><ellipse cx="375.2" cy="379.1" rx="2.0" ry="1.2" fill="#a89080" opacity="0.76"/><ellipse cx="441.0" cy="357.8" rx="3.6" ry="2.6" fill="#e0a060" opacity="0.62"/><ellipse cx="33.0" cy="372.9" rx="4.2" ry="3.3" fill="#e0a060" opacity="0.65"/><ellipse cx="297.4" cy="376.7" rx="1.8" ry="1.4" fill="#d89050" opacity="0.59"/><ellipse cx="71.7" cy="330.9" rx="1.6" ry="1.0" fill="#b8a090" opacity="0.87"/><ellipse cx="642.1" cy="356.4" rx="1.7" ry="1.3" fill="#b8a090" opacity="0.67"/><ellipse cx="536.9" cy="361.3" rx="2.4" ry="1.8" fill="#d89050" opacity="0.53"/><ellipse cx="345.6" cy="347.3" rx="4.7" ry="3.9" fill="#d89050" opacity="0.88"/><ellipse cx="508.1" cy="355.4" rx="4.6" ry="2.9" fill="#d89050" opacity="0.65"/><ellipse cx="580.2" cy="377.9" rx="4.9" ry="4.1" fill="#a89080" opacity="0.69"/><ellipse cx="571.8" cy="367.6" rx="4.5" ry="3.0" fill="#b8a090" opacity="0.59"/><ellipse cx="602.5" cy="371.3" rx="2.9" ry="2.1" fill="#a89080" opacity="0.86"/><ellipse cx="98.5" cy="322.1" rx="1.9" ry="1.6" fill="#f0b070" opacity="0.89"/><ellipse cx="477.2" cy="350.1" rx="2.0" ry="1.5" fill="#e0a060" opacity="0.78"/><ellipse cx="501.8" cy="350.0" rx="3.6" ry="2.3" fill="#a89080" opacity="0.86"/><ellipse cx="44.9" cy="370.9" rx="4.7" ry="4.1" fill="#e0a060" opacity="0.60"/><ellipse cx="138.4" cy="328.6" rx="4.8" ry="4.2" fill="#b8a090" opacity="0.53"/><ellipse cx="511.7" cy="365.7" rx="3.2" ry="1.8" fill="#b8a090" opacity="0.58"/><ellipse cx="217.3" cy="349.1" rx="1.6" ry="0.9" fill="#f0b070" opacity="0.52"/><ellipse cx="517.5" cy="377.7" rx="4.2" ry="3.1" fill="#c88048" opacity="0.84"/><ellipse cx="421.0" cy="349.7" rx="2.9" ry="2.0" fill="#e0a060" opacity="0.64"/><ellipse cx="479.9" cy="362.6" rx="2.3" ry="1.9" fill="#e0a060" opacity="0.73"/><ellipse cx="195.5" cy="348.9" rx="3.3" ry="2.1" fill="#e0a060" opacity="0.50"/><ellipse cx="334.3" cy="356.8" rx="4.3" ry="2.5" fill="#c88048" opacity="0.74"/><ellipse cx="651.9" cy="364.6" rx="3.5" ry="2.0" fill="#d89050" opacity="0.88"/><ellipse cx="157.7" cy="335.7" rx="4.8" ry="3.9" fill="#c88048" opacity="0.82"/><ellipse cx="474.8" cy="372.3" rx="3.7" ry="2.4" fill="#c88048" opacity="0.87"/><ellipse cx="607.3" cy="369.4" rx="3.0" ry="2.3" fill="#f0b070" opacity="0.58"/><ellipse cx="179.2" cy="375.1" rx="3.3" ry="2.1" fill="#b8a090" opacity="0.59"/><ellipse cx="313.9" cy="357.5" rx="4.1" ry="3.3" fill="#b8a090" opacity="0.51"/><ellipse cx="396.1" cy="361.9" rx="4.5" ry="3.1" fill="#a89080" opacity="0.80"/><ellipse cx="115.5" cy="339.3" rx="4.2" ry="3.1" fill="#d89050" opacity="0.63"/><ellipse cx="437.7" cy="368.2" rx="3.3" ry="2.0" fill="#b8a090" opacity="0.83"/><ellipse cx="420.4" cy="369.5" rx="4.9" ry="3.9" fill="#a89080" opacity="0.71"/><ellipse cx="109.6" cy="332.8" rx="2.2" ry="1.9" fill="#b8a090" opacity="0.90"/><ellipse cx="112.1" cy="353.8" rx="2.2" ry="1.2" fill="#d89050" opacity="0.82"/><ellipse cx="499.4" cy="358.8" rx="2.2" ry="1.7" fill="#e0a060" opacity="0.61"/><ellipse cx="602.9" cy="357.5" rx="1.5" ry="1.3" fill="#c88048" opacity="0.78"/><ellipse cx="340.8" cy="363.2" rx="3.1" ry="1.7" fill="#a89080" opacity="0.80"/><ellipse cx="3.8" cy="333.1" rx="4.5" ry="3.5" fill="#a89080" opacity="0.80"/><ellipse cx="286.8" cy="344.7" rx="4.0" ry="3.4" fill="#b8a090" opacity="0.78"/><ellipse cx="580.5" cy="366.2" rx="3.7" ry="2.6" fill="#f0b070" opacity="0.60"/><ellipse cx="477.1" cy="377.1" rx="2.3" ry="1.6" fill="#b8a090" opacity="0.75"/><ellipse cx="170.3" cy="346.9" rx="3.1" ry="2.3" fill="#c88048" opacity="0.71"/><ellipse cx="450.2" cy="376.0" rx="4.6" ry="2.9" fill="#e0a060" opacity="0.66"/><ellipse cx="333.6" cy="380.5" rx="1.6" ry="1.2" fill="#d89050" opacity="0.79"/><ellipse cx="647.9" cy="356.1" rx="2.7" ry="2.3" fill="#c88048" opacity="0.72"/><ellipse cx="488.5" cy="361.6" rx="3.7" ry="3.1" fill="#a89080" opacity="0.64"/><ellipse cx="505.4" cy="359.4" rx="5.0" ry="2.8" fill="#a89080" opacity="0.81"/><ellipse cx="83.4" cy="380.7" rx="2.7" ry="1.4" fill="#f0b070" opacity="0.65"/><ellipse cx="41.9" cy="325.6" rx="4.7" ry="3.5" fill="#b8a090" opacity="0.64"/><ellipse cx="180.6" cy="339.2" rx="4.1" ry="3.6" fill="#a89080" opacity="0.89"/><ellipse cx="677.1" cy="380.7" rx="3.1" ry="1.8" fill="#e0a060" opacity="0.82"/><ellipse cx="432.0" cy="359.7" rx="3.5" ry="2.0" fill="#d89050" opacity="0.64"/><ellipse cx="435.0" cy="373.5" rx="4.4" ry="3.0" fill="#f0b070" opacity="0.80"/><ellipse cx="442.4" cy="371.7" rx="3.1" ry="2.6" fill="#d89050" opacity="0.61"/><ellipse cx="256.2" cy="343.9" rx="3.0" ry="1.7" fill="#e0a060" opacity="0.82"/><ellipse cx="544.1" cy="355.7" rx="3.8" ry="2.4" fill="#c88048" opacity="0.67"/><ellipse cx="434.0" cy="366.7" rx="2.8" ry="2.4" fill="#c88048" opacity="0.52"/><ellipse cx="563.8" cy="377.3" rx="4.2" ry="2.4" fill="#f0b070" opacity="0.75"/><ellipse cx="10.2" cy="325.7" rx="4.8" ry="3.7" fill="#f0b070" opacity="0.74"/><ellipse cx="393.9" cy="375.2" rx="2.1" ry="1.5" fill="#d89050" opacity="0.58"/><ellipse cx="274.1" cy="348.9" rx="5.0" ry="3.4" fill="#2e2420" opacity="0.69"/><ellipse cx="276.5" cy="346.5" rx="2.5" ry="1.4" fill="#d89050" opacity="0.6"/><ellipse cx="373.5" cy="359.4" rx="3.5" ry="2.1" fill="#2e2420" opacity="0.42"/><ellipse cx="374.9" cy="358.0" rx="1.7" ry="0.8" fill="#d89050" opacity="0.6"/><ellipse cx="457.1" cy="352.3" rx="2.6" ry="1.5" fill="#2e2420" opacity="0.64"/><ellipse cx="457.3" cy="351.3" rx="1.3" ry="0.6" fill="#d89050" opacity="0.6"/><ellipse cx="329.9" cy="358.7" rx="5.5" ry="2.7" fill="#2e2420" opacity="0.41"/><ellipse cx="331.4" cy="356.8" rx="2.8" ry="1.1" fill="#d89050" opacity="0.6"/><ellipse cx="109.2" cy="327.6" rx="5.5" ry="3.3" fill="#2e2420" opacity="0.45"/><ellipse cx="108.7" cy="325.3" rx="2.7" ry="1.3" fill="#d89050" opacity="0.6"/><ellipse cx="681.0" cy="372.8" rx="2.9" ry="1.6" fill="#2e2420" opacity="0.58"/><ellipse cx="679.4" cy="371.7" rx="1.5" ry="0.6" fill="#d89050" opacity="0.6"/><ellipse cx="501.6" cy="366.4" rx="6.0" ry="2.6" fill="#2e2420" opacity="0.52"/><ellipse cx="98.4" cy="326.3" rx="4.1" ry="1.8" fill="#2e2420" opacity="0.38"/><ellipse cx="232.4" cy="350.6" rx="4.8" ry="3.6" fill="#2e2420" opacity="0.45"/><ellipse cx="231.0" cy="348.0" rx="2.4" ry="1.5" fill="#d89050" opacity="0.6"/><ellipse cx="35.9" cy="330.8" rx="3.8" ry="2.3" fill="#2e2420" opacity="0.47"/><ellipse cx="594.5" cy="351.6" rx="3.0" ry="1.8" fill="#2e2420" opacity="0.39"/><ellipse cx="595.3" cy="350.3" rx="1.5" ry="0.7" fill="#d89050" opacity="0.6"/><ellipse cx="86.9" cy="340.6" rx="2.4" ry="1.9" fill="#2e2420" opacity="0.49"/><ellipse cx="86.6" cy="339.2" rx="1.2" ry="0.8" fill="#d89050" opacity="0.6"/><ellipse cx="390.9" cy="356.8" rx="2.5" ry="1.1" fill="#2e2420" opacity="0.64"/><ellipse cx="391.7" cy="356.0" rx="1.3" ry="0.4" fill="#d89050" opacity="0.6"/><ellipse cx="41.0" cy="333.6" rx="4.7" ry="2.6" fill="#2e2420" opacity="0.40"/><ellipse cx="469.3" cy="364.8" rx="2.4" ry="1.0" fill="#2e2420" opacity="0.57"/><ellipse cx="118.4" cy="333.8" rx="6.3" ry="3.6" fill="#2e2420" opacity="0.39"/><ellipse cx="9.1" cy="340.7" rx="2.7" ry="1.4" fill="#2e2420" opacity="0.60"/><ellipse cx="125.8" cy="326.2" rx="2.1" ry="1.3" fill="#2e2420" opacity="0.55"/><ellipse cx="339.0" cy="353.3" rx="6.1" ry="4.3" fill="#2e2420" opacity="0.50"/><ellipse cx="275.6" cy="341.5" rx="5.4" ry="3.4" fill="#2e2420" opacity="0.70"/><ellipse cx="105.8" cy="334.6" rx="4.7" ry="2.1" fill="#2e2420" opacity="0.52"/><ellipse cx="426.9" cy="357.2" rx="2.0" ry="1.4" fill="#2e2420" opacity="0.70"/><ellipse cx="148.6" cy="333.6" rx="4.4" ry="2.2" fill="#2e2420" opacity="0.55"/><ellipse cx="149.9" cy="332.1" rx="2.2" ry="0.9" fill="#d89050" opacity="0.6"/><ellipse cx="628.4" cy="357.0" rx="5.7" ry="3.9" fill="#2e2420" opacity="0.40"/><ellipse cx="199.6" cy="345.9" rx="4.5" ry="3.0" fill="#2e2420" opacity="0.66"/><ellipse cx="35.9" cy="326.7" rx="2.3" ry="1.7" fill="#2e2420" opacity="0.59"/><ellipse cx="264.9" cy="344.8" rx="5.0" ry="3.9" fill="#2e2420" opacity="0.64"/><ellipse cx="215.4" cy="352.7" rx="5.6" ry="3.3" fill="#2e2420" opacity="0.41"/><ellipse cx="79.5" cy="340.3" rx="2.8" ry="2.0" fill="#2e2420" opacity="0.52"/><ellipse cx="308.3" cy="347.0" rx="5.8" ry="3.1" fill="#2e2420" opacity="0.45"/><ellipse cx="443.3" cy="362.9" rx="5.0" ry="3.7" fill="#2e2420" opacity="0.60"/><ellipse cx="441.2" cy="360.3" rx="2.5" ry="1.5" fill="#d89050" opacity="0.6"/><ellipse cx="567.0" cy="358.4" rx="6.9" ry="3.4" fill="#2e2420" opacity="0.49"/><ellipse cx="569.3" cy="356.0" rx="3.4" ry="1.4" fill="#d89050" opacity="0.6"/><ellipse cx="159.6" cy="341.0" rx="5.4" ry="2.9" fill="#2e2420" opacity="0.44"/><ellipse cx="162.3" cy="338.9" rx="2.7" ry="1.2" fill="#d89050" opacity="0.6"/><ellipse cx="519.8" cy="362.5" rx="3.4" ry="1.6" fill="#2e2420" opacity="0.66"/><ellipse cx="100.1" cy="338.1" rx="6.0" ry="3.7" fill="#2e2420" opacity="0.62"/><ellipse cx="100.4" cy="335.5" rx="3.0" ry="1.5" fill="#d89050" opacity="0.6"/><ellipse cx="367.7" cy="356.5" rx="3.9" ry="2.8" fill="#2e2420" opacity="0.60"/><ellipse cx="210.7" cy="338.3" rx="4.0" ry="2.7" fill="#2e2420" opacity="0.67"/><ellipse cx="208.4" cy="336.4" rx="2.0" ry="1.1" fill="#d89050" opacity="0.6"/><ellipse cx="262.2" cy="348.3" rx="4.7" ry="2.5" fill="#2e2420" opacity="0.37"/><ellipse cx="262.3" cy="346.5" rx="2.3" ry="1.0" fill="#d89050" opacity="0.6"/><ellipse cx="176.7" cy="348.2" rx="3.6" ry="2.2" fill="#2e2420" opacity="0.42"/><ellipse cx="175.0" cy="346.6" rx="1.8" ry="0.9" fill="#d89050" opacity="0.6"/><ellipse cx="548.8" cy="354.0" rx="4.9" ry="2.7" fill="#2e2420" opacity="0.62"/><ellipse cx="167.7" cy="349.1" rx="4.5" ry="3.3" fill="#2e2420" opacity="0.48"/><ellipse cx="165.5" cy="346.8" rx="2.2" ry="1.3" fill="#d89050" opacity="0.6"/><ellipse cx="215.1" cy="338.0" rx="3.4" ry="2.2" fill="#2e2420" opacity="0.38"/><ellipse cx="216.6" cy="336.5" rx="1.7" ry="0.9" fill="#d89050" opacity="0.6"/><ellipse cx="385.1" cy="359.4" rx="3.1" ry="2.4" fill="#2e2420" opacity="0.45"/><ellipse cx="384.9" cy="357.7" rx="1.5" ry="0.9" fill="#d89050" opacity="0.6"/><ellipse cx="403.9" cy="360.6" rx="2.7" ry="2.0" fill="#2e2420" opacity="0.47"/><ellipse cx="257.6" cy="339.9" rx="2.2" ry="1.2" fill="#2e2420" opacity="0.60"/><ellipse cx="258.5" cy="339.0" rx="1.1" ry="0.5" fill="#d89050" opacity="0.6"/><ellipse cx="609.4" cy="361.9" rx="5.2" ry="4.0" fill="#2e2420" opacity="0.60"/><ellipse cx="608.2" cy="359.1" rx="2.6" ry="1.6" fill="#d89050" opacity="0.6"/><ellipse cx="158.8" cy="335.0" rx="6.6" ry="4.0" fill="#2e2420" opacity="0.41"/><ellipse cx="252.6" cy="342.9" rx="5.6" ry="2.6" fill="#2e2420" opacity="0.68"/><ellipse cx="40.4" cy="334.5" rx="2.1" ry="1.6" fill="#2e2420" opacity="0.44"/><ellipse cx="41.0" cy="333.3" rx="1.1" ry="0.7" fill="#d89050" opacity="0.6"/><ellipse cx="518.7" cy="357.8" rx="2.5" ry="1.3" fill="#2e2420" opacity="0.35"/><ellipse cx="519.4" cy="356.8" rx="1.3" ry="0.5" fill="#d89050" opacity="0.6"/><ellipse cx="401.6" cy="358.0" rx="5.3" ry="3.1" fill="#2e2420" opacity="0.48"/><ellipse cx="400.9" cy="355.9" rx="2.6" ry="1.2" fill="#d89050" opacity="0.6"/><ellipse cx="258.5" cy="346.5" rx="6.0" ry="4.6" fill="#2e2420" opacity="0.66"/><ellipse cx="261.5" cy="343.3" rx="3.0" ry="1.8" fill="#d89050" opacity="0.6"/><ellipse cx="544.0" cy="352.0" rx="6.2" ry="2.7" fill="#2e2420" opacity="0.57"/><ellipse cx="545.9" cy="350.2" rx="3.1" ry="1.1" fill="#d89050" opacity="0.6"/><ellipse cx="530.0" cy="365.1" rx="6.6" ry="3.7" fill="#2e2420" opacity="0.36"/><ellipse cx="533.8" cy="362.6" rx="3.3" ry="1.5" fill="#d89050" opacity="0.6"/><ellipse cx="219.7" cy="341.4" rx="2.6" ry="1.4" fill="#2e2420" opacity="0.47"/><ellipse cx="122.7" cy="331.8" rx="6.4" ry="3.7" fill="#2e2420" opacity="0.40"/><ellipse cx="120.8" cy="329.2" rx="3.2" ry="1.5" fill="#d89050" opacity="0.6"/><ellipse cx="17.3" cy="335.3" rx="3.5" ry="2.5" fill="#2e2420" opacity="0.44"/><ellipse cx="17.1" cy="333.5" rx="1.7" ry="1.0" fill="#d89050" opacity="0.6"/><ellipse cx="328.5" cy="346.6" rx="4.6" ry="3.0" fill="#2e2420" opacity="0.63"/><ellipse cx="381.3" cy="363.1" rx="2.6" ry="1.8" fill="#2e2420" opacity="0.69"/><ellipse cx="380.6" cy="361.8" rx="1.3" ry="0.7" fill="#d89050" opacity="0.6"/><ellipse cx="162.5" cy="337.9" rx="4.0" ry="2.2" fill="#2e2420" opacity="0.41"/><ellipse cx="666.4" cy="360.8" rx="5.2" ry="3.0" fill="#2e2420" opacity="0.53"/><ellipse cx="666.0" cy="358.7" rx="2.6" ry="1.2" fill="#d89050" opacity="0.6"/><ellipse cx="537.7" cy="364.7" rx="3.4" ry="1.9" fill="#2e2420" opacity="0.36"/><ellipse cx="536.8" cy="363.4" rx="1.7" ry="0.7" fill="#d89050" opacity="0.6"/><ellipse cx="123.0" cy="338.2" rx="4.6" ry="2.3" fill="#2e2420" opacity="0.41"/><ellipse cx="564.5" cy="363.3" rx="5.7" ry="4.0" fill="#2e2420" opacity="0.41"/><ellipse cx="565.7" cy="360.5" rx="2.8" ry="1.6" fill="#d89050" opacity="0.6"/><ellipse cx="428.0" cy="353.4" rx="3.5" ry="1.4" fill="#2e2420" opacity="0.59"/><ellipse cx="429.4" cy="352.4" rx="1.8" ry="0.6" fill="#d89050" opacity="0.6"/><ellipse cx="624.0" cy="358.7" rx="3.7" ry="1.9" fill="#2e2420" opacity="0.57"/><ellipse cx="61.5" cy="333.4" rx="5.8" ry="2.6" fill="#2e2420" opacity="0.58"/><ellipse cx="62.0" cy="331.5" rx="2.9" ry="1.1" fill="#d89050" opacity="0.6"/><ellipse cx="671.3" cy="360.3" rx="5.5" ry="3.5" fill="#2e2420" opacity="0.65"/><ellipse cx="674.1" cy="357.8" rx="2.8" ry="1.4" fill="#d89050" opacity="0.6"/><ellipse cx="659.7" cy="358.1" rx="3.8" ry="1.9" fill="#2e2420" opacity="0.64"/><ellipse cx="530.6" cy="363.7" rx="4.9" ry="3.7" fill="#2e2420" opacity="0.45"/><ellipse cx="531.9" cy="361.1" rx="2.4" ry="1.5" fill="#d89050" opacity="0.6"/><ellipse cx="304.0" cy="342.7" rx="6.0" ry="2.7" fill="#2e2420" opacity="0.44"/><ellipse cx="304.9" cy="340.8" rx="3.0" ry="1.1" fill="#d89050" opacity="0.6"/><ellipse cx="114.3" cy="327.8" rx="4.8" ry="3.7" fill="#2e2420" opacity="0.36"/><ellipse cx="503.1" cy="354.6" rx="6.2" ry="4.1" fill="#2e2420" opacity="0.51"/><ellipse cx="502.7" cy="351.8" rx="3.1" ry="1.6" fill="#d89050" opacity="0.6"/><ellipse cx="238.8" cy="340.0" rx="2.9" ry="1.5" fill="#2e2420" opacity="0.51"/><ellipse cx="239.7" cy="338.9" rx="1.4" ry="0.6" fill="#d89050" opacity="0.6"/><ellipse cx="74.9" cy="327.0" rx="6.4" ry="4.0" fill="#2e2420" opacity="0.43"/><ellipse cx="76.2" cy="324.2" rx="3.2" ry="1.6" fill="#d89050" opacity="0.6"/><ellipse cx="314.7" cy="349.4" rx="6.7" ry="2.7" fill="#2e2420" opacity="0.57"/><ellipse cx="406.6" cy="360.5" rx="2.2" ry="1.7" fill="#2e2420" opacity="0.37"/><ellipse cx="406.3" cy="359.3" rx="1.1" ry="0.7" fill="#d89050" opacity="0.6"/><ellipse cx="571.1" cy="360.1" rx="6.2" ry="3.9" fill="#2e2420" opacity="0.70"/><ellipse cx="570.3" cy="357.4" rx="3.1" ry="1.6" fill="#d89050" opacity="0.6"/><ellipse cx="382.1" cy="355.0" rx="2.7" ry="1.8" fill="#2e2420" opacity="0.47"/><ellipse cx="451.6" cy="350.5" rx="2.5" ry="1.2" fill="#2e2420" opacity="0.46"/><ellipse cx="452.1" cy="349.6" rx="1.3" ry="0.5" fill="#d89050" opacity="0.6"/><ellipse cx="153.6" cy="339.3" rx="4.0" ry="3.2" fill="#2e2420" opacity="0.51"/><ellipse cx="155.8" cy="337.1" rx="2.0" ry="1.3" fill="#d89050" opacity="0.6"/><ellipse cx="662.8" cy="358.3" rx="6.3" ry="4.1" fill="#2e2420" opacity="0.67"/><ellipse cx="427.8" cy="363.2" rx="2.2" ry="1.0" fill="#2e2420" opacity="0.39"/><ellipse cx="427.1" cy="362.5" rx="1.1" ry="0.4" fill="#d89050" opacity="0.6"/><ellipse cx="26.8" cy="328.6" rx="3.7" ry="1.7" fill="#2e2420" opacity="0.37"/><ellipse cx="627.2" cy="365.4" rx="2.4" ry="1.5" fill="#2e2420" opacity="0.68"/><ellipse cx="627.3" cy="364.3" rx="1.2" ry="0.6" fill="#d89050" opacity="0.6"/><ellipse cx="602.8" cy="361.8" rx="4.9" ry="2.5" fill="#2e2420" opacity="0.61"/><ellipse cx="195.6" cy="343.8" rx="5.5" ry="2.7" fill="#2e2420" opacity="0.49"/><ellipse cx="194.7" cy="341.9" rx="2.7" ry="1.1" fill="#d89050" opacity="0.6"/><ellipse cx="607.3" cy="352.6" rx="4.4" ry="3.2" fill="#2e2420" opacity="0.36"/><ellipse cx="605.7" cy="350.4" rx="2.2" ry="1.3" fill="#d89050" opacity="0.6"/><ellipse cx="371.8" cy="364.6" rx="4.0" ry="3.1" fill="#2e2420" opacity="0.41"/><ellipse cx="220.6" cy="342.9" rx="3.3" ry="2.5" fill="#2e2420" opacity="0.43"/><ellipse cx="218.7" cy="341.1" rx="1.7" ry="1.0" fill="#d89050" opacity="0.6"/><ellipse cx="375.3" cy="359.0" rx="3.7" ry="2.5" fill="#2e2420" opacity="0.53"/><ellipse cx="241.2" cy="350.8" rx="4.6" ry="3.7" fill="#2e2420" opacity="0.59"/><ellipse cx="283.8" cy="351.6" rx="2.7" ry="1.3" fill="#2e2420" opacity="0.56"/><ellipse cx="284.9" cy="350.7" rx="1.4" ry="0.5" fill="#d89050" opacity="0.6"/><ellipse cx="64.7" cy="340.1" rx="6.6" ry="5.3" fill="#2e2420" opacity="0.44"/><ellipse cx="430.5" cy="361.5" rx="4.1" ry="1.8" fill="#2e2420" opacity="0.49"/><ellipse cx="428.6" cy="360.2" rx="2.0" ry="0.7" fill="#d89050" opacity="0.6"/><ellipse cx="270.7" cy="356.0" rx="2.7" ry="2.0" fill="#2e2420" opacity="0.45"/><ellipse cx="75.6" cy="338.6" rx="5.5" ry="2.8" fill="#2e2420" opacity="0.47"/><ellipse cx="75.8" cy="336.7" rx="2.7" ry="1.1" fill="#d89050" opacity="0.6"/><ellipse cx="405.5" cy="361.2" rx="2.0" ry="1.4" fill="#2e2420" opacity="0.70"/><ellipse cx="405.0" cy="360.2" rx="1.0" ry="0.6" fill="#d89050" opacity="0.6"/><ellipse cx="365.6" cy="361.3" rx="4.2" ry="2.3" fill="#2e2420" opacity="0.43"/><ellipse cx="224.8" cy="353.3" rx="5.0" ry="2.5" fill="#2e2420" opacity="0.46"/><ellipse cx="606.9" cy="363.0" rx="2.1" ry="1.1" fill="#2e2420" opacity="0.66"/><ellipse cx="607.0" cy="362.3" rx="1.1" ry="0.4" fill="#d89050" opacity="0.6"/><ellipse cx="212.8" cy="347.3" rx="4.2" ry="3.1" fill="#2e2420" opacity="0.60"/><ellipse cx="212.6" cy="345.2" rx="2.1" ry="1.2" fill="#d89050" opacity="0.6"/><ellipse cx="27.7" cy="337.7" rx="4.3" ry="1.7" fill="#2e2420" opacity="0.37"/><ellipse cx="27.3" cy="336.5" rx="2.1" ry="0.7" fill="#d89050" opacity="0.6"/><ellipse cx="341.1" cy="355.5" rx="6.6" ry="3.1" fill="#2e2420" opacity="0.42"/><ellipse cx="340.3" cy="353.4" rx="3.3" ry="1.2" fill="#d89050" opacity="0.6"/><ellipse cx="522.6" cy="364.3" rx="4.9" ry="3.3" fill="#2e2420" opacity="0.61"/><ellipse cx="521.7" cy="362.0" rx="2.5" ry="1.3" fill="#d89050" opacity="0.6"/><ellipse cx="249.7" cy="340.2" rx="3.6" ry="1.7" fill="#2e2420" opacity="0.58"/><ellipse cx="249.0" cy="339.0" rx="1.8" ry="0.7" fill="#d89050" opacity="0.6"/><ellipse cx="637.0" cy="360.7" rx="6.9" ry="4.5" fill="#2e2420" opacity="0.53"/><ellipse cx="141.5" cy="344.4" rx="4.1" ry="1.7" fill="#2e2420" opacity="0.55"/><ellipse cx="141.8" cy="343.2" rx="2.0" ry="0.7" fill="#d89050" opacity="0.6"/><ellipse cx="429.9" cy="361.8" rx="5.5" ry="2.2" fill="#2e2420" opacity="0.35"/><ellipse cx="376.5" cy="364.1" rx="4.0" ry="1.8" fill="#2e2420" opacity="0.36"/><ellipse cx="375.0" cy="362.9" rx="2.0" ry="0.7" fill="#d89050" opacity="0.6"/><ellipse cx="523.7" cy="359.0" rx="6.4" ry="4.8" fill="#2e2420" opacity="0.53"/><ellipse cx="521.4" cy="355.6" rx="3.2" ry="1.9" fill="#d89050" opacity="0.6"/><ellipse cx="409.8" cy="353.1" rx="4.6" ry="2.8" fill="#2e2420" opacity="0.36"/><ellipse cx="412.3" cy="351.1" rx="2.3" ry="1.1" fill="#d89050" opacity="0.6"/><ellipse cx="334.0" cy="352.0" rx="4.2" ry="3.0" fill="#2e2420" opacity="0.58"/><ellipse cx="394.2" cy="352.9" rx="3.2" ry="1.6" fill="#2e2420" opacity="0.36"/><ellipse cx="585.2" cy="361.8" rx="2.3" ry="1.1" fill="#2e2420" opacity="0.57"/><ellipse cx="584.4" cy="361.0" rx="1.2" ry="0.4" fill="#d89050" opacity="0.6"/><ellipse cx="269.7" cy="352.3" rx="2.2" ry="0.9" fill="#2e2420" opacity="0.43"/><ellipse cx="268.8" cy="351.6" rx="1.1" ry="0.4" fill="#d89050" opacity="0.6"/><ellipse cx="399.7" cy="353.8" rx="2.0" ry="1.5" fill="#2e2420" opacity="0.51"/><ellipse cx="399.1" cy="352.7" rx="1.0" ry="0.6" fill="#d89050" opacity="0.6"/><ellipse cx="603.9" cy="362.9" rx="2.3" ry="1.6" fill="#2e2420" opacity="0.59"/><ellipse cx="603.7" cy="361.9" rx="1.2" ry="0.6" fill="#d89050" opacity="0.6"/><ellipse cx="271.4" cy="351.5" rx="2.1" ry="1.6" fill="#2e2420" opacity="0.38"/><ellipse cx="271.1" cy="350.4" rx="1.1" ry="0.6" fill="#d89050" opacity="0.6"/><ellipse cx="5.2" cy="341.4" rx="4.0" ry="2.2" fill="#2e2420" opacity="0.47"/><ellipse cx="228.7" cy="348.4" rx="6.8" ry="3.9" fill="#2e2420" opacity="0.67"/><ellipse cx="227.8" cy="345.7" rx="3.4" ry="1.5" fill="#d89050" opacity="0.6"/><ellipse cx="318.0" cy="348.9" rx="4.2" ry="2.1" fill="#2e2420" opacity="0.36"/><ellipse cx="164.7" cy="336.3" rx="3.0" ry="1.8" fill="#2e2420" opacity="0.63"/><ellipse cx="164.5" cy="335.0" rx="1.5" ry="0.7" fill="#d89050" opacity="0.6"/><ellipse cx="541.4" cy="353.4" rx="3.8" ry="1.9" fill="#2e2420" opacity="0.49"/><ellipse cx="395.5" cy="355.5" rx="4.4" ry="2.1" fill="#2e2420" opacity="0.65"/><ellipse cx="641.6" cy="369.3" rx="5.0" ry="2.9" fill="#2e2420" opacity="0.70"/><ellipse cx="641.0" cy="367.3" rx="2.5" ry="1.1" fill="#d89050" opacity="0.6"/><ellipse cx="347.4" cy="348.0" rx="5.8" ry="3.9" fill="#2e2420" opacity="0.38"/><ellipse cx="501.2" cy="362.7" rx="2.1" ry="1.5" fill="#2e2420" opacity="0.40"/><ellipse cx="501.7" cy="361.7" rx="1.1" ry="0.6" fill="#d89050" opacity="0.6"/><ellipse cx="473.1" cy="363.2" rx="3.2" ry="1.5" fill="#2e2420" opacity="0.66"/><ellipse cx="474.6" cy="362.2" rx="1.6" ry="0.6" fill="#d89050" opacity="0.6"/><ellipse cx="548.3" cy="361.6" rx="3.0" ry="2.0" fill="#2e2420" opacity="0.38"/><ellipse cx="549.5" cy="360.1" rx="1.5" ry="0.8" fill="#d89050" opacity="0.6"/><ellipse cx="271.7" cy="345.9" rx="6.2" ry="3.6" fill="#2e2420" opacity="0.57"/><ellipse cx="587.8" cy="361.5" rx="2.9" ry="1.6" fill="#2e2420" opacity="0.63"/><ellipse cx="610.8" cy="348.7" rx="5.5" ry="3.2" fill="#2e2420" opacity="0.70"/><ellipse cx="613.5" cy="346.4" rx="2.8" ry="1.3" fill="#d89050" opacity="0.6"/><ellipse cx="66.5" cy="330.8" rx="3.4" ry="2.2" fill="#2e2420" opacity="0.43"/><ellipse cx="275.6" cy="350.2" rx="4.2" ry="2.9" fill="#2e2420" opacity="0.40"/><ellipse cx="376.1" cy="359.5" rx="6.7" ry="4.2" fill="#2e2420" opacity="0.43"/><ellipse cx="376.3" cy="356.5" rx="3.4" ry="1.7" fill="#d89050" opacity="0.6"/><ellipse cx="630.4" cy="362.2" rx="4.9" ry="3.8" fill="#2e2420" opacity="0.39"/><ellipse cx="446.3" cy="364.6" rx="6.4" ry="4.0" fill="#2e2420" opacity="0.59"/><ellipse cx="463.8" cy="351.2" rx="3.6" ry="2.6" fill="#2e2420" opacity="0.47"/><ellipse cx="284.1" cy="352.9" rx="7.0" ry="4.5" fill="#2e2420" opacity="0.43"/><ellipse cx="282.9" cy="349.7" rx="3.5" ry="1.8" fill="#d89050" opacity="0.6"/><ellipse cx="646.7" cy="361.4" rx="3.7" ry="2.2" fill="#2e2420" opacity="0.59"/><ellipse cx="426.3" cy="358.5" rx="5.4" ry="2.6" fill="#2e2420" opacity="0.59"/><ellipse cx="530.0" cy="357.6" rx="2.9" ry="2.3" fill="#2e2420" opacity="0.64"/><ellipse cx="528.8" cy="356.0" rx="1.5" ry="0.9" fill="#d89050" opacity="0.6"/><ellipse cx="111.5" cy="335.1" rx="3.2" ry="1.6" fill="#2e2420" opacity="0.69"/><ellipse cx="110.9" cy="334.0" rx="1.6" ry="0.6" fill="#d89050" opacity="0.6"/><ellipse cx="63.0" cy="336.8" rx="2.7" ry="1.8" fill="#2e2420" opacity="0.52"/><ellipse cx="63.7" cy="335.5" rx="1.3" ry="0.7" fill="#d89050" opacity="0.6"/><ellipse cx="4.0" cy="338.5" rx="2.7" ry="1.7" fill="#2e2420" opacity="0.59"/><ellipse cx="4.7" cy="337.3" rx="1.3" ry="0.7" fill="#d89050" opacity="0.6"/><ellipse cx="400.1" cy="354.8" rx="5.1" ry="2.3" fill="#2e2420" opacity="0.50"/><ellipse cx="461.1" cy="353.0" rx="6.9" ry="5.1" fill="#2e2420" opacity="0.49"/><ellipse cx="462.6" cy="349.5" rx="3.4" ry="2.0" fill="#d89050" opacity="0.6"/><ellipse cx="8.4" cy="334.7" rx="2.2" ry="1.7" fill="#2e2420" opacity="0.46"/><ellipse cx="7.9" cy="333.5" rx="1.1" ry="0.7" fill="#d89050" opacity="0.6"/><ellipse cx="655.7" cy="358.7" rx="4.2" ry="2.7" fill="#2e2420" opacity="0.45"/><ellipse cx="653.4" cy="356.9" rx="2.1" ry="1.1" fill="#d89050" opacity="0.6"/><ellipse cx="319.1" cy="359.1" rx="4.4" ry="3.1" fill="#2e2420" opacity="0.47"/><ellipse cx="180.1" cy="345.3" rx="6.8" ry="4.0" fill="#2e2420" opacity="0.62"/><ellipse cx="178.9" cy="342.5" rx="3.4" ry="1.6" fill="#d89050" opacity="0.6"/><ellipse cx="61.9" cy="331.3" rx="5.1" ry="3.5" fill="#2e2420" opacity="0.59"/><ellipse cx="53.2" cy="338.1" rx="2.1" ry="1.2" fill="#2e2420" opacity="0.40"/><ellipse cx="54.4" cy="337.2" rx="1.1" ry="0.5" fill="#d89050" opacity="0.6"/><ellipse cx="357.8" cy="361.7" rx="5.4" ry="2.4" fill="#2e2420" opacity="0.60"/><ellipse cx="358.6" cy="360.0" rx="2.7" ry="1.0" fill="#d89050" opacity="0.6"/><ellipse cx="258.4" cy="349.8" rx="3.8" ry="1.9" fill="#2e2420" opacity="0.40"/><ellipse cx="570.6" cy="352.8" rx="2.3" ry="1.0" fill="#2e2420" opacity="0.63"/><ellipse cx="680.9" cy="368.4" rx="2.3" ry="1.1" fill="#2e2420" opacity="0.50"/><ellipse cx="678.0" cy="370.9" rx="5.1" ry="2.3" fill="#2e2420" opacity="0.43"/><ellipse cx="678.9" cy="369.3" rx="2.6" ry="0.9" fill="#d89050" opacity="0.6"/><ellipse cx="273.3" cy="355.9" rx="6.3" ry="3.7" fill="#2e2420" opacity="0.43"/><ellipse cx="269.8" cy="353.4" rx="3.1" ry="1.5" fill="#d89050" opacity="0.6"/></g>
<linearGradient id="bdk" x1="0" x2="0" y1="320" y2="382" gradientUnits="userSpaceOnUse"><stop offset="0" stop-color="#241c18" stop-opacity="0.5"/><stop offset="0.55" stop-color="#241c18" stop-opacity="0"/></linearGradient>
<rect y="300" width="681" height="82" fill="url(#bdk)"/>
<linearGradient id="bgl" x1="0" x2="0" y1="320" y2="382" gradientUnits="userSpaceOnUse"><stop offset="0.3" stop-color="#b0a090" stop-opacity="0"/><stop offset="1" stop-color="#b0a094" stop-opacity="0.15"/></linearGradient>
<rect y="300" width="681" height="82" fill="url(#bgl)"/></g>
<path d="M0,213 L8,211 L20,210 L35,211 L45,212 L59,214 L59,217 L83,216 L85,212 L97,212 L99,220 L105,222 L115,221 L125,218 L131,215 L141,216 L147,220 L153,223 L175,221 L178,220 L211,220 L213,226 L220,231 L232,232 L240,236 L249,239 L260,236 L270,238 L300,240 L330,242 L385,247 L440,247 L460,248 L461,257 L0,257 Z" fill="#3e3122"/>
<clipPath id="lclip"><path d="M0,213 L8,211 L20,210 L35,211 L45,212 L59,214 L59,217 L83,216 L85,212 L97,212 L99,220 L105,222 L115,221 L125,218 L131,215 L141,216 L147,220 L153,223 L175,221 L178,220 L211,220 L213,226 L220,231 L232,232 L240,236 L249,239 L260,236 L270,238 L300,240 L330,242 L385,247 L440,247 L460,248 L461,257 L0,257 Z"/></clipPath>
<g clip-path="url(#lclip)"><g filter="url(#blur1)"><ellipse cx="280.9" cy="252.0" rx="4.6" ry="2.7" fill="#8a6e38" opacity="0.38"/><ellipse cx="130.3" cy="244.9" rx="4.6" ry="2.7" fill="#6e5a30" opacity="0.38"/><ellipse cx="409.7" cy="242.8" rx="2.0" ry="1.2" fill="#8a6e38" opacity="0.38"/><ellipse cx="415.8" cy="244.0" rx="3.5" ry="2.1" fill="#6e5a30" opacity="0.38"/><ellipse cx="369.9" cy="250.1" rx="4.8" ry="2.9" fill="#6e5a30" opacity="0.38"/><ellipse cx="39.1" cy="227.3" rx="4.3" ry="2.6" fill="#8a6e38" opacity="0.38"/><ellipse cx="448.2" cy="253.5" rx="5.1" ry="3.1" fill="#7a6234" opacity="0.38"/><ellipse cx="332.5" cy="246.0" rx="5.3" ry="3.2" fill="#6e5a30" opacity="0.38"/><ellipse cx="438.3" cy="247.8" rx="5.2" ry="3.1" fill="#5e4c2a" opacity="0.38"/><ellipse cx="398.0" cy="248.4" rx="5.2" ry="3.1" fill="#8a6e38" opacity="0.38"/><ellipse cx="102.3" cy="246.3" rx="5.5" ry="3.3" fill="#8a6e38" opacity="0.38"/><ellipse cx="303.8" cy="246.5" rx="4.9" ry="2.9" fill="#6e5a30" opacity="0.38"/><ellipse cx="165.6" cy="237.3" rx="4.2" ry="2.5" fill="#5e4c2a" opacity="0.38"/><ellipse cx="52.6" cy="221.9" rx="6.4" ry="3.9" fill="#7a6234" opacity="0.38"/><ellipse cx="101.8" cy="248.1" rx="5.2" ry="3.1" fill="#8a6e38" opacity="0.38"/><ellipse cx="244.2" cy="245.0" rx="4.4" ry="2.7" fill="#6e5a30" opacity="0.38"/><ellipse cx="104.2" cy="243.3" rx="2.6" ry="1.5" fill="#7a6234" opacity="0.38"/><ellipse cx="391.7" cy="250.2" rx="6.0" ry="3.6" fill="#8a6e38" opacity="0.38"/><ellipse cx="397.2" cy="248.6" rx="5.6" ry="3.3" fill="#7a6234" opacity="0.38"/><ellipse cx="288.2" cy="253.5" rx="4.6" ry="2.7" fill="#6e5a30" opacity="0.38"/><ellipse cx="381.9" cy="246.7" rx="2.9" ry="1.7" fill="#8a6e38" opacity="0.38"/><ellipse cx="259.0" cy="251.3" rx="2.7" ry="1.6" fill="#7a6234" opacity="0.38"/><ellipse cx="186.0" cy="233.8" rx="2.2" ry="1.3" fill="#8a6e38" opacity="0.38"/><ellipse cx="211.5" cy="235.2" rx="2.7" ry="1.6" fill="#7a6234" opacity="0.38"/><ellipse cx="285.7" cy="252.5" rx="4.8" ry="2.9" fill="#5e4c2a" opacity="0.38"/><ellipse cx="77.3" cy="246.4" rx="3.7" ry="2.2" fill="#7a6234" opacity="0.38"/><ellipse cx="379.8" cy="243.5" rx="3.9" ry="2.3" fill="#5e4c2a" opacity="0.38"/><ellipse cx="332.0" cy="242.5" rx="5.0" ry="3.0" fill="#7a6234" opacity="0.38"/><ellipse cx="163.6" cy="238.9" rx="5.0" ry="3.0" fill="#7a6234" opacity="0.38"/><ellipse cx="425.7" cy="250.1" rx="3.3" ry="2.0" fill="#8a6e38" opacity="0.38"/><ellipse cx="319.2" cy="242.3" rx="6.9" ry="4.2" fill="#6e5a30" opacity="0.38"/><ellipse cx="52.2" cy="215.8" rx="2.6" ry="1.5" fill="#5e4c2a" opacity="0.38"/><ellipse cx="85.2" cy="243.0" rx="3.5" ry="2.1" fill="#6e5a30" opacity="0.38"/><ellipse cx="384.7" cy="249.1" rx="3.3" ry="2.0" fill="#5e4c2a" opacity="0.38"/><ellipse cx="436.4" cy="242.2" rx="3.7" ry="2.2" fill="#8a6e38" opacity="0.38"/><ellipse cx="224.1" cy="241.7" rx="2.2" ry="1.3" fill="#7a6234" opacity="0.38"/><ellipse cx="34.3" cy="238.6" rx="5.2" ry="3.1" fill="#6e5a30" opacity="0.38"/><ellipse cx="387.8" cy="253.6" rx="5.5" ry="3.3" fill="#6e5a30" opacity="0.38"/><ellipse cx="181.0" cy="248.7" rx="5.1" ry="3.0" fill="#7a6234" opacity="0.38"/><ellipse cx="166.0" cy="242.5" rx="3.6" ry="2.1" fill="#8a6e38" opacity="0.38"/><ellipse cx="271.0" cy="242.5" rx="2.8" ry="1.7" fill="#5e4c2a" opacity="0.38"/><ellipse cx="334.5" cy="246.0" rx="4.3" ry="2.6" fill="#5e4c2a" opacity="0.38"/><ellipse cx="144.6" cy="239.0" rx="4.4" ry="2.7" fill="#8a6e38" opacity="0.38"/><ellipse cx="9.4" cy="232.5" rx="6.9" ry="4.2" fill="#7a6234" opacity="0.38"/><ellipse cx="290.2" cy="250.7" rx="2.7" ry="1.6" fill="#6e5a30" opacity="0.38"/><ellipse cx="125.7" cy="242.0" rx="3.3" ry="2.0" fill="#8a6e38" opacity="0.38"/><ellipse cx="456.4" cy="242.4" rx="4.8" ry="2.9" fill="#7a6234" opacity="0.38"/><ellipse cx="401.3" cy="251.3" rx="5.2" ry="3.1" fill="#7a6234" opacity="0.38"/><ellipse cx="166.9" cy="238.1" rx="6.0" ry="3.6" fill="#8a6e38" opacity="0.38"/><ellipse cx="313.4" cy="245.6" rx="5.8" ry="3.5" fill="#5e4c2a" opacity="0.38"/><ellipse cx="234.1" cy="244.4" rx="3.8" ry="2.3" fill="#6e5a30" opacity="0.38"/><ellipse cx="153.8" cy="245.7" rx="5.4" ry="3.2" fill="#6e5a30" opacity="0.38"/><ellipse cx="231.7" cy="249.1" rx="6.0" ry="3.6" fill="#5e4c2a" opacity="0.38"/><ellipse cx="69.4" cy="236.7" rx="6.4" ry="3.9" fill="#6e5a30" opacity="0.38"/><ellipse cx="186.3" cy="240.1" rx="5.9" ry="3.5" fill="#8a6e38" opacity="0.38"/><ellipse cx="269.9" cy="243.7" rx="5.6" ry="3.4" fill="#5e4c2a" opacity="0.38"/><ellipse cx="334.3" cy="248.6" rx="6.7" ry="4.0" fill="#5e4c2a" opacity="0.38"/><ellipse cx="33.8" cy="222.2" rx="6.6" ry="4.0" fill="#8a6e38" opacity="0.38"/><ellipse cx="139.9" cy="239.4" rx="4.3" ry="2.6" fill="#6e5a30" opacity="0.38"/><ellipse cx="331.8" cy="253.1" rx="6.2" ry="3.7" fill="#5e4c2a" opacity="0.38"/><ellipse cx="413.6" cy="245.3" rx="3.3" ry="2.0" fill="#7a6234" opacity="0.38"/><ellipse cx="348.9" cy="249.5" rx="3.2" ry="1.9" fill="#7a6234" opacity="0.38"/><ellipse cx="100.4" cy="240.2" rx="3.0" ry="1.8" fill="#5e4c2a" opacity="0.38"/><ellipse cx="397.5" cy="249.8" rx="3.0" ry="1.8" fill="#7a6234" opacity="0.38"/><ellipse cx="443.0" cy="249.2" rx="2.4" ry="1.4" fill="#5e4c2a" opacity="0.38"/><ellipse cx="330.7" cy="242.1" rx="3.4" ry="2.0" fill="#7a6234" opacity="0.38"/><ellipse cx="294.4" cy="253.1" rx="3.1" ry="1.8" fill="#5e4c2a" opacity="0.38"/><ellipse cx="399.2" cy="242.3" rx="4.4" ry="2.7" fill="#5e4c2a" opacity="0.38"/><ellipse cx="80.3" cy="248.5" rx="6.0" ry="3.6" fill="#7a6234" opacity="0.38"/><ellipse cx="288.1" cy="246.0" rx="4.5" ry="2.7" fill="#6e5a30" opacity="0.38"/><ellipse cx="118.2" cy="241.3" rx="2.1" ry="1.2" fill="#5e4c2a" opacity="0.38"/><ellipse cx="259.5" cy="253.9" rx="2.3" ry="1.4" fill="#5e4c2a" opacity="0.38"/><ellipse cx="72.1" cy="233.3" rx="3.1" ry="1.8" fill="#7a6234" opacity="0.38"/><ellipse cx="164.6" cy="239.5" rx="3.7" ry="2.2" fill="#8a6e38" opacity="0.38"/><ellipse cx="302.4" cy="249.2" rx="3.7" ry="2.2" fill="#5e4c2a" opacity="0.38"/><ellipse cx="374.2" cy="247.7" rx="2.2" ry="1.3" fill="#5e4c2a" opacity="0.38"/><ellipse cx="299.8" cy="248.6" rx="5.5" ry="3.3" fill="#5e4c2a" opacity="0.38"/><ellipse cx="166.2" cy="242.5" rx="3.4" ry="2.0" fill="#5e4c2a" opacity="0.38"/><ellipse cx="4.2" cy="233.1" rx="5.3" ry="3.2" fill="#5e4c2a" opacity="0.38"/><ellipse cx="69.3" cy="244.3" rx="4.0" ry="2.4" fill="#7a6234" opacity="0.38"/><ellipse cx="431.0" cy="249.5" rx="2.6" ry="1.6" fill="#8a6e38" opacity="0.38"/><ellipse cx="255.4" cy="244.2" rx="6.7" ry="4.0" fill="#5e4c2a" opacity="0.38"/><ellipse cx="339.3" cy="252.8" rx="6.4" ry="3.8" fill="#8a6e38" opacity="0.38"/><ellipse cx="243.1" cy="246.2" rx="5.5" ry="3.3" fill="#6e5a30" opacity="0.38"/><ellipse cx="451.9" cy="248.0" rx="5.2" ry="3.1" fill="#5e4c2a" opacity="0.38"/><ellipse cx="414.5" cy="246.7" rx="3.1" ry="1.8" fill="#7a6234" opacity="0.38"/><ellipse cx="49.6" cy="242.9" rx="2.3" ry="1.4" fill="#6e5a30" opacity="0.38"/><ellipse cx="310.1" cy="246.2" rx="3.1" ry="1.9" fill="#6e5a30" opacity="0.38"/><ellipse cx="188.6" cy="249.5" rx="6.7" ry="4.0" fill="#8a6e38" opacity="0.38"/><ellipse cx="14.1" cy="215.8" rx="5.5" ry="3.3" fill="#8a6e38" opacity="0.38"/><ellipse cx="55.5" cy="240.8" rx="7.6" ry="3.8" fill="#9a7a40" opacity="0.4"/><ellipse cx="66.9" cy="250.3" rx="6.0" ry="3.0" fill="#9a7a40" opacity="0.4"/><ellipse cx="189.8" cy="244.7" rx="8.6" ry="4.3" fill="#7a6030" opacity="0.4"/><ellipse cx="229.0" cy="239.9" rx="4.8" ry="2.4" fill="#8a7038" opacity="0.4"/><ellipse cx="79.6" cy="244.8" rx="8.3" ry="4.2" fill="#8a7038" opacity="0.4"/><ellipse cx="76.7" cy="246.5" rx="8.7" ry="4.4" fill="#8a7038" opacity="0.4"/><ellipse cx="139.0" cy="250.4" rx="4.3" ry="2.1" fill="#9a7a40" opacity="0.4"/><ellipse cx="86.5" cy="248.9" rx="8.2" ry="4.1" fill="#8a7038" opacity="0.4"/><ellipse cx="104.4" cy="240.0" rx="8.6" ry="4.3" fill="#9a7a40" opacity="0.4"/><ellipse cx="5.9" cy="239.6" rx="8.8" ry="4.4" fill="#8a7038" opacity="0.4"/><ellipse cx="32.0" cy="242.2" rx="6.0" ry="3.0" fill="#7a6030" opacity="0.4"/><ellipse cx="23.4" cy="240.4" rx="7.1" ry="3.5" fill="#8a7038" opacity="0.4"/><ellipse cx="99.4" cy="247.0" rx="7.0" ry="3.5" fill="#7a6030" opacity="0.4"/><ellipse cx="211.7" cy="251.7" rx="3.2" ry="1.6" fill="#8a7038" opacity="0.4"/><ellipse cx="48.3" cy="246.8" rx="3.1" ry="1.5" fill="#8a7038" opacity="0.4"/><ellipse cx="121.1" cy="241.2" rx="5.6" ry="2.8" fill="#8a7038" opacity="0.4"/><ellipse cx="174.8" cy="238.7" rx="8.4" ry="4.2" fill="#8a7038" opacity="0.4"/><ellipse cx="210.9" cy="239.7" rx="5.9" ry="3.0" fill="#8a7038" opacity="0.4"/><ellipse cx="126.1" cy="238.0" rx="4.3" ry="2.2" fill="#9a7a40" opacity="0.4"/><ellipse cx="35.5" cy="248.3" rx="6.0" ry="3.0" fill="#8a7038" opacity="0.4"/><ellipse cx="127.2" cy="249.8" rx="8.7" ry="4.4" fill="#8a7038" opacity="0.4"/><ellipse cx="83.9" cy="241.0" rx="8.8" ry="4.4" fill="#8a7038" opacity="0.4"/><ellipse cx="175.5" cy="241.8" rx="4.1" ry="2.0" fill="#7a6030" opacity="0.4"/><ellipse cx="64.6" cy="251.5" rx="4.2" ry="2.1" fill="#8a7038" opacity="0.4"/><ellipse cx="97.9" cy="245.8" rx="5.2" ry="2.6" fill="#8a7038" opacity="0.4"/><ellipse cx="78.2" cy="238.6" rx="5.7" ry="2.9" fill="#7a6030" opacity="0.4"/><ellipse cx="131.7" cy="247.7" rx="8.9" ry="4.4" fill="#9a7a40" opacity="0.4"/><ellipse cx="172.3" cy="243.6" rx="4.9" ry="2.5" fill="#7a6030" opacity="0.4"/><ellipse cx="91.9" cy="240.1" rx="7.6" ry="3.8" fill="#7a6030" opacity="0.4"/><ellipse cx="192.9" cy="250.6" rx="6.8" ry="3.4" fill="#8a7038" opacity="0.4"/><ellipse cx="145.9" cy="251.0" rx="4.5" ry="2.3" fill="#9a7a40" opacity="0.4"/><ellipse cx="175.2" cy="251.9" rx="8.0" ry="4.0" fill="#9a7a40" opacity="0.4"/><ellipse cx="27.9" cy="249.8" rx="7.7" ry="3.9" fill="#9a7a40" opacity="0.4"/><ellipse cx="11.9" cy="247.7" rx="4.9" ry="2.5" fill="#9a7a40" opacity="0.4"/><ellipse cx="106.2" cy="247.4" rx="5.7" ry="2.9" fill="#9a7a40" opacity="0.4"/><ellipse cx="0.2" cy="248.4" rx="8.1" ry="4.1" fill="#9a7a40" opacity="0.4"/><ellipse cx="82.2" cy="245.6" rx="5.3" ry="2.6" fill="#9a7a40" opacity="0.4"/><ellipse cx="189.9" cy="250.2" rx="5.1" ry="2.6" fill="#8a7038" opacity="0.4"/><ellipse cx="94.4" cy="245.4" rx="6.7" ry="3.3" fill="#9a7a40" opacity="0.4"/><ellipse cx="198.3" cy="239.0" rx="7.8" ry="3.9" fill="#9a7a40" opacity="0.4"/></g></g>
<rect x="33" y="217" width="25" height="18" fill="#d09a50"/>
<rect x="33" y="217" width="7" height="18" fill="#a87840"/>
<rect x="41" y="221" width="15" height="2" fill="#e8b060"/>
<rect x="59" y="216" width="40" height="17" fill="#c89c72"/>
<rect x="59" y="216" width="40" height="2" fill="#c87a50"/>
<rect x="84" y="219.5" width="13" height="4" fill="#7a5a48"/><rect x="84" y="226" width="13" height="4" fill="#7a5a48"/><rect x="66" y="219.5" width="14" height="3" fill="#9a7a5a"/>
<ellipse cx="72" cy="229" rx="14" ry="8" fill="#3a2c1c"/>
<ellipse cx="90" cy="213.5" rx="7" ry="3" fill="#4a3a28"/>
<ellipse cx="141" cy="222" rx="10" ry="7" fill="#3a2c1c"/>
<rect x="124" y="223" width="26" height="8" fill="#9a7c60"/>
<rect x="178.5" y="220" width="32.5" height="11" fill="#cdb090"/>
<rect x="180" y="223" width="30" height="2" fill="#a08868"/>
<rect x="211" y="231" width="24" height="9" fill="#7a6450"/>
<rect x="0" y="253" width="175" height="7" fill="#8a6a58"/>
<rect x="0" y="260" width="175" height="3.5" fill="#7a4a38"/>
<path d="M7.6,223 L7.6,261" stroke="#7a6a60" stroke-width="1.1"/>
<path d="M12,240 L18,262" stroke="#c8b8a8" stroke-width="1"/>
<rect x="0" y="253" width="16" height="7" fill="#d08a48"/>
<rect x="0" y="261" width="18" height="10" fill="#cfc4ba"/>
<path d="M161,254 L239,254 L229,265.5 L165,265.5 Z" fill="#dcd2c8"/>
<path d="M169,247.4 L182,239 L190,241.7 L218,249.3 L239,254 L161,254 Z" fill="#e8e0d6"/>
<path d="M176,247 L200,246 L214,250 L182,250.5 Z" fill="#4a4446"/>
<rect x="184" y="259.8" width="4" height="2.4" fill="#4a4446"/><rect x="192" y="259.8" width="4" height="2.4" fill="#4a4446"/>
<rect x="150" y="262" width="12" height="3" fill="#b8a89a"/>
<path d="M284.6,255.8 L385,255.8 L398.5,262.4 L394,264.2 L290.3,264.3 Z" fill="#2a2530"/>
<path d="M315,253 L320,245 L336,240 L360,238 L366,244 L379.5,251 L380,256 L315,256 Z" fill="#e2d8cc"/>
<path d="M322,249 L362,248.5 L366,252.5 L318,253 Z" fill="#4a4248"/>
<path d="M335.8,237.7 H360.5" stroke="#e6dccf" stroke-width="1.3"/>
<path d="M365.8,238 L365.8,228" stroke="#d8ccc0" stroke-width="1"/>
<path d="M366,252 L394,252 L394,255.8 L366,255.8 Z" fill="#d8ccbe"/>
<path d="M323.5,153.2 L320.6,245.3" stroke="#4a3a30" stroke-width="1.2"/>
<path d="M323.3,156 L294,241.5 M324,158 L351,236" stroke="#6a5548" stroke-width="0.7"/>
<path d="M500.4,255 L580,255 L585.8,262.7 L501.3,263.7 Z" fill="#ddd2c6"/>
<path d="M527.5,253 L537,245 L564.4,243.3 L570,249 L580,255 L520,255.5 Z" fill="#e6dcd0"/>
<path d="M532.4,235.5 L566.4,240.5 L532.4,243 Z" fill="#6a5c5a"/>
<rect x="539" y="257.5" width="7" height="1.6" fill="#5a5058"/><rect x="552" y="257.5" width="7" height="1.6" fill="#5a5058"/><rect x="566" y="257.5" width="6" height="1.6" fill="#5a5058"/>
<path d="M532.4,127.7 L531.4,249" stroke="#4a3a30" stroke-width="1.2"/>
<path d="M531.5,137 L500.4,255 M535.3,136 L565.4,239" stroke="#6a5548" stroke-width="0.7"/>
<rect x="590.7" y="250" width="19.3" height="6" fill="#c48c3c"/>
<rect x="592" y="251.5" width="16.5" height="3" fill="#e0a850"/>
</g>
</svg></svg>
<svg class="a" style="left:1038px;top:100px" width="64" height="37" viewBox="0 0 64 37">
<defs><clipPath id="thc"><rect x="0" y="0.6" width="64" height="36" rx="2.5"/></clipPath>
<linearGradient id="thsky" x1="0" x2="1" y1="0" y2="0.6"><stop offset="0" stop-color="#eaa66c"/><stop offset="0.5" stop-color="#f6bc88"/><stop offset="1" stop-color="#fcd0aa"/></linearGradient>
<linearGradient id="thsea" x1="0" x2="0" y1="0" y2="1"><stop offset="0" stop-color="#a89888"/><stop offset="1" stop-color="#b8a490"/></linearGradient></defs>
<g clip-path="url(#thc)">
<rect x="0" y="0" width="64" height="37" fill="url(#thsky)"/>
<path d="M0,20 L6,19.6 L12,20.3 L20,21.5 L30,22.6 L44,23.4 L44,25 L0,25 Z" fill="#4a3a2a"/>
<rect x="0" y="24.5" width="16" height="1.2" fill="#8a6a58"/>
<rect x="0" y="25" width="64" height="10" fill="url(#thsea)"/>
<path d="M15,23.6 H23 L22,25.2 H16 Z M28,24 H38 L37,25.4 H29 Z M50,23.8 H58 L57,25.3 H51 Z" fill="#d8ccc0"/>
<path d="M30.3,14.4 V23.4 M50,12 V23.4" stroke="#7a6a60" stroke-width="0.35"/>
<path d="M0,31 Q10,30.6 20,31.6 Q40,32.6 64,33.2 L64,37 L0,37 Z" fill="#7a6458"/>
<path d="M0,32.6 Q20,33.4 40,33.9 L64,34.4 L64,37 L0,37 Z" fill="#6a5a52"/>
</g>
<rect x="0.25" y="0.85" width="63.5" height="35.5" rx="2.5" fill="none" stroke="#ffffff" stroke-opacity="0.25" stroke-width="0.5"/>
</svg>
<!-- /PHOTO -->
<!-- MENU TEXT -->
<div class="t" style="left:175px;top:15px;font-size:13px;color:#979797">File</div>
<div class="t" style="left:222px;top:15px;font-size:13px;color:#979797">Edit</div>
<div class="t" style="left:272px;top:15px;font-size:13px;color:#979797">View</div>
<div class="t" style="left:327px;top:15px;font-size:13px;color:#979797">Help</div>

<!-- FILTER PANEL TEXT -->
<div class="t" style="left:74px;top:61px;font-size:13px;font-weight:bold;color:#f2f2f2;letter-spacing:-0.45px">Filter</div>
<div class="t" style="left:74px;top:95px;font-size:12px;color:#7a7a7a">Effects</div>
<div class="t" style="left:80px;top:129px;font-size:13px;color:#dcdcdc;letter-spacing:-0.4px">Blur</div>
<div class="t" style="left:80px;top:173px;font-size:13px;color:#dcdcdc;letter-spacing:-0.4px">Glow</div>
<div class="t" style="left:80px;top:217px;font-size:13px;color:#dcdcdc;letter-spacing:-0.4px">Pixelate</div>
<div class="t" style="left:80px;top:261px;font-size:13px;color:#dcdcdc;letter-spacing:-0.4px">Sharpen</div>

<!-- TAB TEXT -->
<div class="t" style="left:302px;top:55px;font-size:13px;color:#e0e0e0;letter-spacing:-0.45px">Sunset.png</div>
<div class="t" style="left:866px;top:55px;font-size:13px;color:#9a9a9a">13%</div>
<div class="t" style="left:1113px;top:112px;font-size:13px;color:#dcdcdc;letter-spacing:-0.4px">Background</div>

</body></html>
